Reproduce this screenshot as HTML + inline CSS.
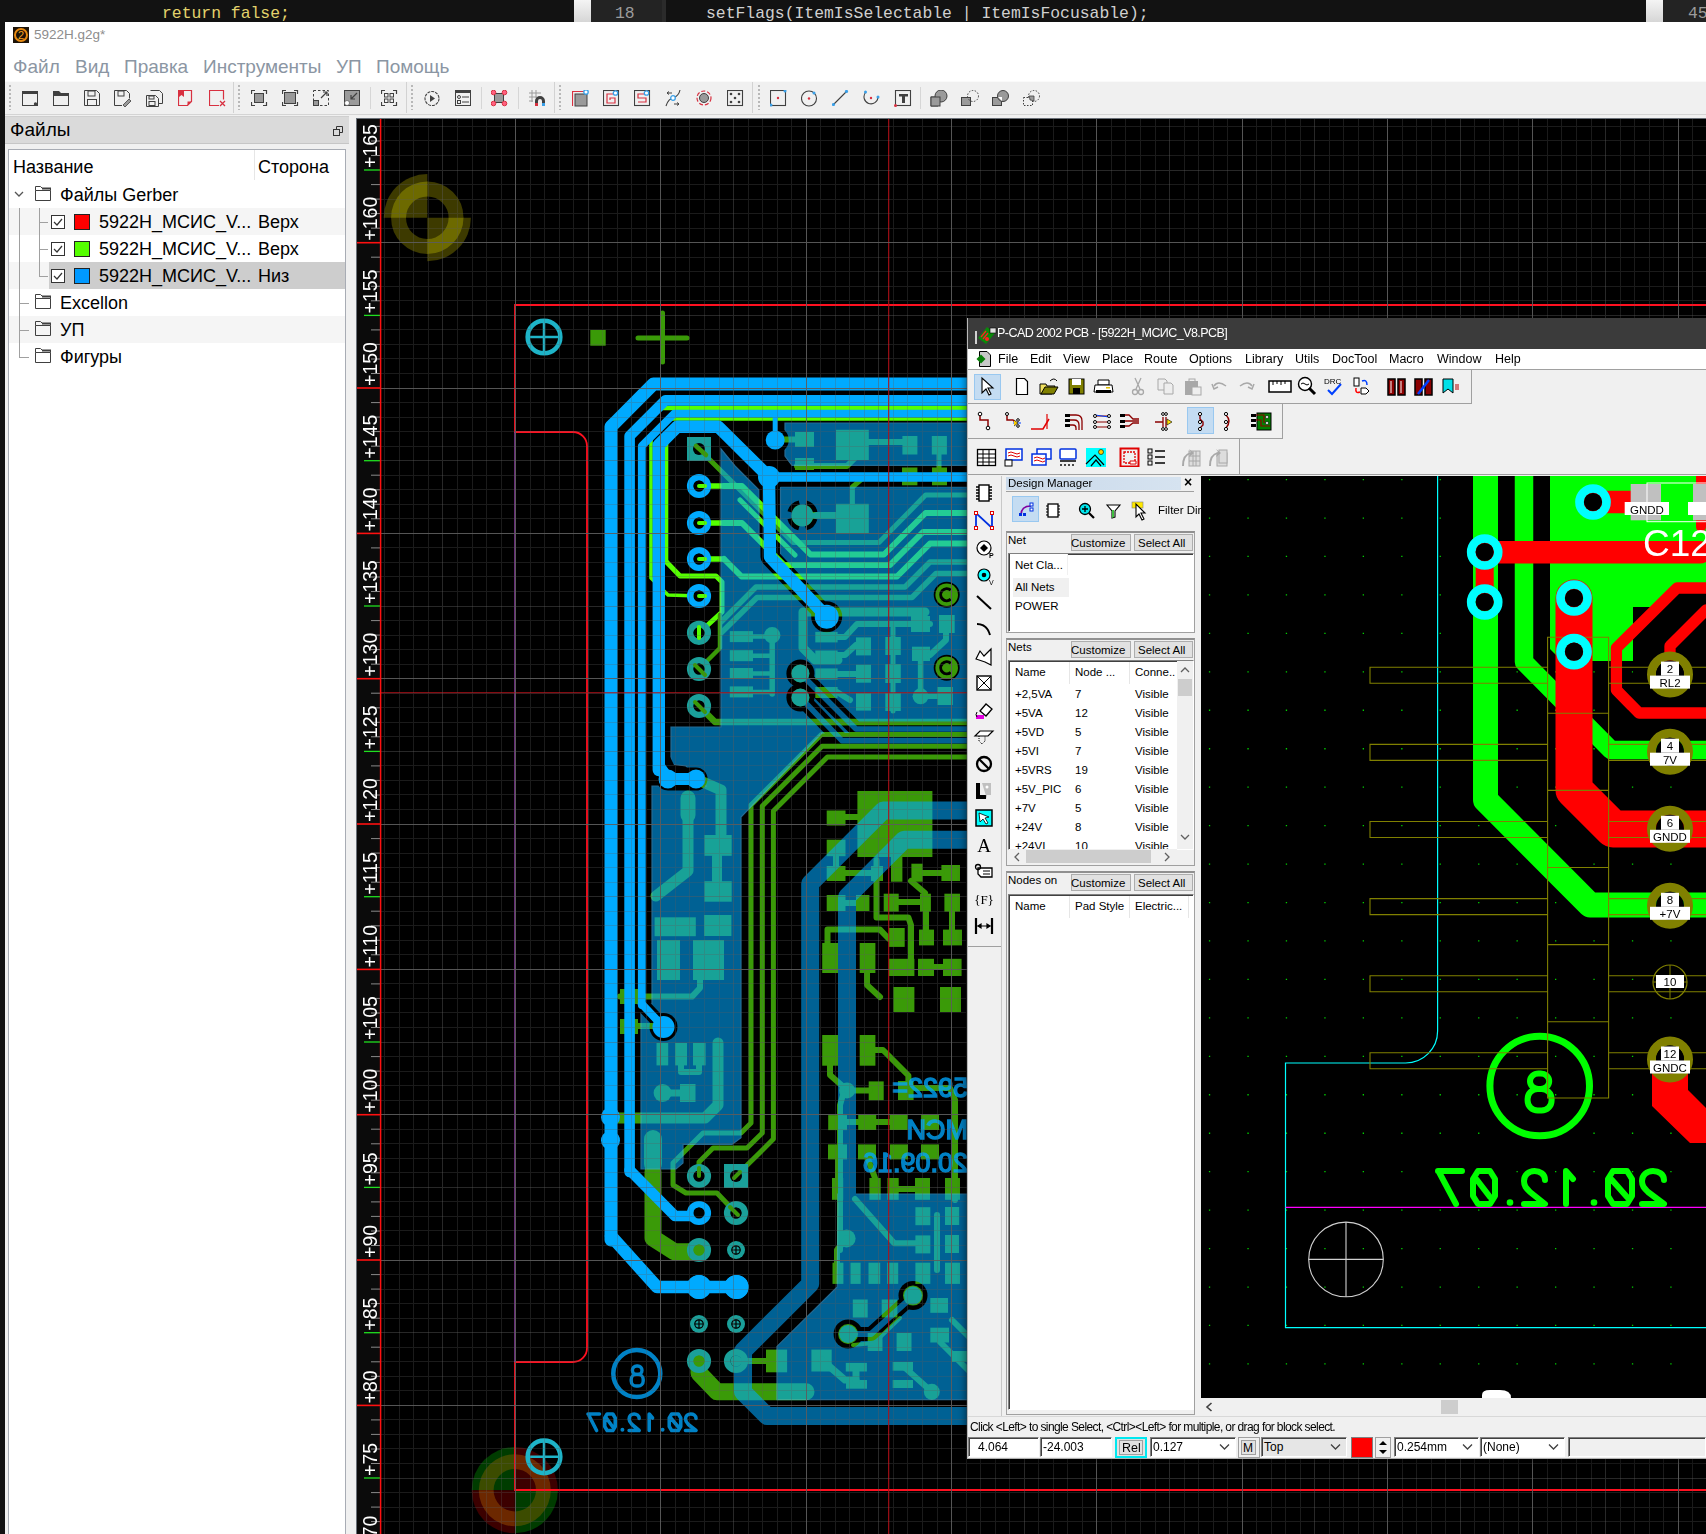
<!DOCTYPE html>
<html><head><meta charset="utf-8"><style>*{margin:0;padding:0;box-sizing:border-box}
html,body{width:1706px;height:1534px;overflow:hidden;background:#121212;font-family:"Liberation Sans",sans-serif}
.a{position:absolute}
.mono{font-family:"Liberation Mono",monospace}
.menu{top:56px;font-size:19px;color:#8b96a3;white-space:nowrap}
.tt{font-size:18px;color:#000;white-space:nowrap}
.pm{font-size:12.5px;color:#000;white-space:nowrap}
.sm{font-size:12px;color:#000;white-space:nowrap}
</style></head><body>
<div class="a" style="left:0;top:0;width:1706px;height:22px;background:#121212"></div>
<div class="a" style="left:574px;top:0;width:17px;height:22px;background:linear-gradient(#f4f4f4,#d6d6d6)"></div>
<div class="a" style="left:591px;top:0;width:71px;height:22px;background:#232323"></div>
<div class="a" style="left:662px;top:0;width:4px;height:22px;background:#2b2b2b"></div>
<div class="a mono" style="left:162px;top:4.5px;font-size:16.4px;line-height:18px;color:#e3d26c;white-space:pre">return false;</div>
<div class="a mono" style="left:615px;top:4.5px;font-size:16.4px;line-height:18px;color:#9c9c9c">18</div>
<div class="a mono" style="left:706px;top:4.5px;font-size:16.4px;line-height:18px;color:#d0d0d0;white-space:pre">setFlags(ItemIsSelectable | ItemIsFocusable);</div>
<div class="a" style="left:1646px;top:0;width:17px;height:22px;background:linear-gradient(#f4f4f4,#d6d6d6)"></div>
<div class="a" style="left:1663px;top:0;width:43px;height:22px;background:#232323"></div>
<div class="a mono" style="left:1688px;top:4.5px;font-size:16.4px;line-height:18px;color:#9c9c9c">45</div>
<div class="a" style="left:5px;top:22px;width:1701px;height:1512px;background:#fff"></div>
<svg class="a" style="left:13px;top:27px" width="16" height="16" viewBox="0 0 16 16"><rect width="16" height="16" fill="#1c1208"/><circle cx="8" cy="8" r="6" fill="none" stroke="#e88a10" stroke-width="2"/><text x="8" y="12" font-size="11" text-anchor="middle" fill="#f0a020" font-family="Liberation Sans">2</text></svg>
<div class="a" style="left:34px;top:27px;font-size:13.5px;color:#8d8d8d;white-space:nowrap">5922H.g2g*</div>
<div class="a menu" style="left:13px">Файл</div>
<div class="a menu" style="left:75px">Вид</div>
<div class="a menu" style="left:124px">Правка</div>
<div class="a menu" style="left:203px">Инструменты</div>
<div class="a menu" style="left:336px">УП</div>
<div class="a menu" style="left:376px">Помощь</div>
<div class="a" style="left:5px;top:81px;width:1701px;height:34px;background:#f0f0f0;border-top:1px solid #fafafa"></div>
<div class="a" style="left:5px;top:114px;width:1701px;height:1px;background:#d4d4d4"></div>
<div class="a" style="left:5px;top:115px;width:1701px;height:3px;background:#f0f0f0"></div>
<div class="a" style="left:9px;top:85px;width:2px;height:25px;background:repeating-linear-gradient(#b8b8b8 0 2px,transparent 2px 4px)"></div>
<div class="a" style="left:238px;top:85px;width:2px;height:25px;background:repeating-linear-gradient(#b8b8b8 0 2px,transparent 2px 4px)"></div>
<div class="a" style="left:411px;top:85px;width:2px;height:25px;background:repeating-linear-gradient(#b8b8b8 0 2px,transparent 2px 4px)"></div>
<div class="a" style="left:559px;top:85px;width:2px;height:25px;background:repeating-linear-gradient(#b8b8b8 0 2px,transparent 2px 4px)"></div>
<div class="a" style="left:758px;top:85px;width:2px;height:25px;background:repeating-linear-gradient(#b8b8b8 0 2px,transparent 2px 4px)"></div>
<div class="a" style="left:233px;top:82px;width:1px;height:31px;background:#d2d2d2"></div>
<div class="a" style="left:406px;top:82px;width:1px;height:31px;background:#d2d2d2"></div>
<div class="a" style="left:554px;top:82px;width:1px;height:31px;background:#d2d2d2"></div>
<div class="a" style="left:752px;top:82px;width:1px;height:31px;background:#d2d2d2"></div>
<div class="a" style="left:370px;top:87px;width:1px;height:22px;background:#d6d6d6"></div>
<div class="a" style="left:481px;top:87px;width:1px;height:22px;background:#d6d6d6"></div>
<div class="a" style="left:518px;top:87px;width:1px;height:22px;background:#d6d6d6"></div>
<div class="a" style="left:920px;top:87px;width:1px;height:22px;background:#d6d6d6"></div>
<svg class="a" style="left:22px;top:90px" width="18" height="17" viewBox="0 0 18 17"><rect x="0.5" y="2.5" width="15" height="13" fill="none" stroke="#404040"/><rect x="0" y="1" width="16" height="3" fill="#404040"/><circle cx="13.5" cy="14" r="1.7" fill="#404040"/></svg>
<svg class="a" style="left:53px;top:90px" width="18" height="17" viewBox="0 0 18 17"><rect x="0.5" y="3.5" width="15" height="12" fill="none" stroke="#404040"/><path d="M0 1h6l2 2h8v3H0z" fill="#404040"/></svg>
<svg class="a" style="left:84px;top:90px" width="18" height="17" viewBox="0 0 18 17"><path d="M0.5 0.5h12l3 3v12h-15z" fill="none" stroke="#404040"/><rect x="4" y="1" width="7" height="5" fill="none" stroke="#404040"/><rect x="3.5" y="9.5" width="9" height="6" fill="none" stroke="#404040"/></svg>
<svg class="a" style="left:114px;top:90px" width="18" height="17" viewBox="0 0 18 17"><path d="M0.5 0.5h12l3 3v5M8 15.5H0.5v-15" fill="none" stroke="#404040"/><rect x="4" y="1" width="6" height="5" fill="none" stroke="#404040"/><path d="M9 15l6-6 2 2-6 6z" fill="#9a9a9a" stroke="#404040" stroke-width="0.8"/></svg>
<svg class="a" style="left:146px;top:90px" width="18" height="17" viewBox="0 0 18 17"><path d="M4.5 0.5h9l3 3v10h-4" fill="none" stroke="#404040"/><path d="M0.5 5.5h9l3 3v8h-12z" fill="#f0f0f0" stroke="#404040"/><rect x="3" y="6" width="5" height="3" fill="none" stroke="#404040"/><rect x="3" y="11.5" width="6" height="4" fill="none" stroke="#404040"/></svg>
<svg class="a" style="left:178px;top:90px" width="18" height="17" viewBox="0 0 18 17"><path d="M0.5 0.5h13v11l-4 4h-9z" fill="none" stroke="#d83040" stroke-width="1.2"/><path d="M1 1h5v6l-2.5-2L1 7z" fill="#d83040"/><path d="M9.5 15.5v-4h4z" fill="#d83040"/></svg>
<svg class="a" style="left:209px;top:90px" width="18" height="17" viewBox="0 0 18 17"><path d="M10 15.5H0.5V0.5h14v9" fill="none" stroke="#d83040" stroke-width="1.2"/><path d="M11 11l5 5M16 11l-5 5" stroke="#d83040" stroke-width="1.3"/></svg>
<svg class="a" style="left:251px;top:90px" width="18" height="17" viewBox="0 0 18 17"><path d="M0.5 4V0.5H4M12 0.5h3.5V4M15.5 12v3.5H12M4 15.5H0.5V12" fill="none" stroke="#404040" stroke-width="1.2"/><rect x="3.5" y="3.5" width="9" height="9" fill="#9a9a9a" stroke="#404040"/></svg>
<svg class="a" style="left:282px;top:90px" width="18" height="17" viewBox="0 0 18 17"><path d="M0.5 4V0.5H4M12 0.5h3.5V4M15.5 12v3.5H12M4 15.5H0.5V12" fill="none" stroke="#404040" stroke-width="1.2"/><rect x="2.5" y="2.5" width="11" height="11" fill="#9a9a9a" stroke="#404040"/></svg>
<svg class="a" style="left:313px;top:90px" width="18" height="17" viewBox="0 0 18 17"><rect x="0.5" y="0.5" width="15" height="15" fill="none" stroke="#404040" stroke-dasharray="2.5 2"/><rect x="0.5" y="10.5" width="5" height="5" fill="#9a9a9a" stroke="#404040"/><path d="M8 8l6-6M10 2h4v4" fill="none" stroke="#404040" stroke-width="1.2"/></svg>
<svg class="a" style="left:344px;top:90px" width="18" height="17" viewBox="0 0 18 17"><rect x="0.5" y="0.5" width="15" height="15" fill="#9a9a9a" stroke="#404040"/><circle cx="3" cy="13" r="2.5" fill="#fff" stroke="#404040" stroke-width="0.6"/><path d="M13 3l-6 6M7 5v4h4" fill="none" stroke="#404040" stroke-width="1.2"/></svg>
<svg class="a" style="left:381px;top:90px" width="18" height="17" viewBox="0 0 18 17"><path d="M0.5 4V0.5H4M12 0.5h3.5V4M15.5 12v3.5H12M4 15.5H0.5V12" fill="none" stroke="#404040" stroke-width="1.2"/><rect x="3.5" y="3.5" width="3.5" height="3.5" fill="none" stroke="#404040"/><rect x="9" y="3.5" width="3.5" height="3.5" fill="none" stroke="#404040"/><rect x="3.5" y="9" width="3.5" height="3.5" fill="none" stroke="#404040"/><rect x="9" y="9" width="3.5" height="3.5" fill="none" stroke="#404040"/></svg>
<svg class="a" style="left:424px;top:90px" width="18" height="17" viewBox="0 0 18 17"><circle cx="8" cy="8.5" r="7" fill="none" stroke="#404040" stroke-width="1.1" stroke-dasharray="3 1"/><path d="M6 5v7l5-3.5z" fill="#404040"/></svg>
<svg class="a" style="left:455px;top:90px" width="18" height="17" viewBox="0 0 18 17"><rect x="0.5" y="0.5" width="15" height="15" fill="none" stroke="#404040"/><rect x="0" y="0" width="16" height="3" fill="#404040"/><circle cx="4" cy="7" r="1.5" fill="none" stroke="#404040"/><rect x="2.5" y="10.5" width="3" height="3" fill="none" stroke="#404040"/><path d="M7 7h7M7 12h7" stroke="#404040"/></svg>
<svg class="a" style="left:491px;top:90px" width="18" height="17" viewBox="0 0 18 17"><rect x="3.5" y="3.5" width="9" height="9" fill="#9a9a9a" stroke="#404040"/><circle cx="2.5" cy="2.5" r="2.3" fill="#ff6080" stroke="#d83040"/><circle cx="13.5" cy="2.5" r="2.3" fill="#ff6080" stroke="#d83040"/><circle cx="2.5" cy="13.5" r="2.3" fill="#ff6080" stroke="#d83040"/><circle cx="13.5" cy="13.5" r="2.3" fill="#ff6080" stroke="#d83040"/></svg>
<svg class="a" style="left:529px;top:90px" width="18" height="17" viewBox="0 0 18 17"><path d="M3 0v12M7 0v8M0 3h12M0 7h8M0 11h4" stroke="#9a9a9a"/><path d="M6 16v-5a5 5 0 0 1 10 0v5h-3v-5a2 2 0 0 0-4 0v5z" fill="#404040"/><rect x="6" y="13" width="3" height="3" fill="#d83040"/><rect x="13" y="13" width="3" height="3" fill="#3aa0e8"/></svg>
<svg class="a" style="left:572px;top:90px" width="18" height="17" viewBox="0 0 18 17"><path d="M0.5 16V1.5H13" fill="none" stroke="#d83040" stroke-width="1.2"/><rect x="3" y="4" width="12" height="12" fill="#9a9a9a" stroke="#404040"/><circle cx="14" cy="2" r="2.2" fill="#fff" stroke="#3aa0e8" stroke-width="1.3"/></svg>
<svg class="a" style="left:603px;top:90px" width="18" height="17" viewBox="0 0 18 17"><rect x="0.5" y="0.5" width="15" height="15" fill="none" stroke="#404040" stroke-width="1.1"/><path d="M12 4H4v9h8V8H7v2" fill="none" stroke="#d83040" stroke-width="1.2"/><circle cx="12.5" cy="3" r="2.2" fill="#fff" stroke="#3aa0e8" stroke-width="1.3"/></svg>
<svg class="a" style="left:634px;top:90px" width="18" height="17" viewBox="0 0 18 17"><rect x="0.5" y="0.5" width="15" height="15" fill="none" stroke="#404040" stroke-width="1.1"/><path d="M12 4H4v4h8v4H4" fill="none" stroke="#d83040" stroke-width="1.2"/><circle cx="12.5" cy="3" r="2.2" fill="#fff" stroke="#3aa0e8" stroke-width="1.3"/></svg>
<svg class="a" style="left:665px;top:90px" width="18" height="17" viewBox="0 0 18 17"><path d="M1 16c2-6 4-7 7-8s6-3 7-8" fill="none" stroke="#404040" stroke-width="1.1"/><circle cx="8" cy="8" r="2.3" fill="#fff" stroke="#3aa0e8" stroke-width="1.3"/><path d="M2 3h5M2 3l2-1.5M2 3l2 1.5M9 14h5M14 14l-2-1.5M14 14l-2 1.5" stroke="#404040"/></svg>
<svg class="a" style="left:696px;top:90px" width="18" height="17" viewBox="0 0 18 17"><circle cx="8" cy="8" r="7" fill="none" stroke="#d83040" stroke-width="1.2" stroke-dasharray="4 2"/><circle cx="8" cy="8" r="4.5" fill="#9a9a9a" stroke="#404040"/></svg>
<svg class="a" style="left:727px;top:90px" width="18" height="17" viewBox="0 0 18 17"><rect x="0.5" y="0.5" width="15" height="15" fill="none" stroke="#404040" stroke-width="1.1"/><circle cx="4" cy="4" r="1.3" fill="#404040"/><circle cx="12" cy="4" r="1.3" fill="#404040"/><circle cx="8" cy="8" r="1.3" fill="#404040"/><circle cx="4" cy="12" r="1.3" fill="#404040"/><circle cx="12" cy="12" r="1.3" fill="#404040"/></svg>
<svg class="a" style="left:770px;top:90px" width="18" height="17" viewBox="0 0 18 17"><rect x="0.5" y="0.5" width="15" height="15" fill="none" stroke="#404040" stroke-width="1.1"/><circle cx="8" cy="8" r="1.2" fill="#d83040"/><circle cx="1" cy="15" r="1.5" fill="#3aa0e8"/><circle cx="15" cy="1" r="1.5" fill="#3aa0e8"/></svg>
<svg class="a" style="left:801px;top:90px" width="18" height="17" viewBox="0 0 18 17"><circle cx="8" cy="8.5" r="7.5" fill="none" stroke="#404040" stroke-width="1.1"/><circle cx="8" cy="8.5" r="1.2" fill="#d83040"/><circle cx="13" cy="3" r="1.5" fill="#3aa0e8"/></svg>
<svg class="a" style="left:832px;top:90px" width="18" height="17" viewBox="0 0 18 17"><path d="M1.5 14.5l13-13" stroke="#404040" stroke-width="1.1"/><circle cx="1.5" cy="14.5" r="1.6" fill="#3aa0e8"/><circle cx="14.5" cy="1.5" r="1.6" fill="#3aa0e8"/></svg>
<svg class="a" style="left:863px;top:90px" width="18" height="17" viewBox="0 0 18 17"><path d="M2.5 2.5A7 7 0 1 0 15 7" fill="none" stroke="#404040" stroke-width="1.1"/><circle cx="8" cy="8" r="1.2" fill="#d83040"/><circle cx="2.5" cy="2" r="1.5" fill="#3aa0e8"/><circle cx="15" cy="7" r="1.5" fill="#3aa0e8"/></svg>
<svg class="a" style="left:894px;top:90px" width="18" height="17" viewBox="0 0 18 17"><rect x="1.5" y="0.5" width="15" height="15" fill="none" stroke="#404040" stroke-width="1.1"/><path d="M5 4h9v2.5h-3V13H8V6.5H5z" fill="#404040"/><circle cx="1.5" cy="15.5" r="1.5" fill="#d83040"/></svg>
<svg class="a" style="left:930px;top:90px" width="18" height="17" viewBox="0 0 18 17"><path d="M1 7h7V16H1z" fill="#9a9a9a" stroke="#404040"/><circle cx="11" cy="6" r="6" fill="#9a9a9a" stroke="#404040"/><rect x="1" y="7" width="9" height="9" fill="#9a9a9a" stroke="#404040"/></svg>
<svg class="a" style="left:961px;top:90px" width="18" height="17" viewBox="0 0 18 17"><rect x="0.5" y="7.5" width="9" height="8" fill="#9a9a9a" stroke="#404040"/><circle cx="12" cy="6" r="5.5" fill="none" stroke="#404040" stroke-dasharray="1.5 1.5"/></svg>
<svg class="a" style="left:992px;top:90px" width="18" height="17" viewBox="0 0 18 17"><rect x="0.5" y="7.5" width="9" height="8" fill="#9a9a9a" stroke="#404040"/><circle cx="11" cy="6" r="5.5" fill="#9a9a9a" stroke="#404040"/><path d="M6 7h4v4z" fill="#fff"/></svg>
<svg class="a" style="left:1023px;top:90px" width="18" height="17" viewBox="0 0 18 17"><rect x="0.5" y="7.5" width="9" height="8" fill="none" stroke="#404040" stroke-dasharray="1.5 1.5"/><circle cx="11" cy="6" r="5.5" fill="none" stroke="#404040" stroke-dasharray="1.5 1.5"/><path d="M6 6h5v5A5 5 0 0 1 6 6z" fill="#9a9a9a" stroke="#404040" stroke-width="0.8"/></svg>
<div class="a" style="left:5px;top:115px;width:351px;height:1419px;background:#f0f0f0"></div>
<div class="a" style="left:5px;top:116px;width:344px;height:28px;background:#dadada;border-bottom:1px solid #c6c6c6;border-top:1px solid #cfcfcf"></div>
<div class="a tt" style="left:10px;top:119px;font-size:19px">Файлы</div>
<svg class="a" style="left:333px;top:126px" width="10" height="10" viewBox="0 0 10 10"><rect x="0.5" y="3.5" width="6" height="6" fill="none" stroke="#333"/><path d="M3.5 3.5V0.5h6v6H6.5" fill="none" stroke="#333"/></svg>
<div class="a" style="left:8px;top:149px;width:338px;height:1390px;background:#fff;border:1px solid #a8acb4"></div>
<div class="a" style="left:254px;top:150px;width:1px;height:30px;background:#e6e6e6"></div>
<div class="a tt" style="left:13px;top:157px">Название</div>
<div class="a tt" style="left:258px;top:157px">Сторона</div>
<div class="a" style="left:9px;top:208px;width:336px;height:27px;background:#f5f5f5"></div>
<div class="a" style="left:9px;top:262px;width:40px;height:27px;background:#f5f5f5"></div>
<div class="a" style="left:49px;top:262px;width:296px;height:27px;background:#cdcdcd"></div>
<div class="a" style="left:9px;top:316px;width:336px;height:27px;background:#f5f5f5"></div>
<div class="a" style="left:19px;top:208px;width:1px;height:149px;background:#a0a0a0"></div>
<div class="a" style="left:19px;top:303px;width:10px;height:1px;background:#a0a0a0"></div>
<div class="a" style="left:19px;top:330px;width:10px;height:1px;background:#a0a0a0"></div>
<div class="a" style="left:19px;top:357px;width:10px;height:1px;background:#a0a0a0"></div>
<div class="a" style="left:39px;top:208px;width:1px;height:68px;background:#a0a0a0"></div>
<div class="a" style="left:39px;top:222px;width:9px;height:1px;background:#a0a0a0"></div>
<div class="a" style="left:39px;top:249px;width:9px;height:1px;background:#a0a0a0"></div>
<div class="a" style="left:39px;top:276px;width:9px;height:1px;background:#a0a0a0"></div>
<svg class="a" style="left:14px;top:191px" width="10" height="7" viewBox="0 0 10 7"><path d="M1 1l4 4 4-4" fill="none" stroke="#555" stroke-width="1.3"/></svg>
<svg class="a" style="left:35px;top:186px" width="17" height="16" viewBox="0 0 17 16"><path d="M0.5 4.5h15v10h-15z" fill="none" stroke="#404040"/><path d="M0.5 4.5V0.5h5l2 2h8v2" fill="none" stroke="#404040"/><rect x="7" y="1.5" width="9" height="2" fill="#404040"/></svg>
<div class="a tt" style="left:60px;top:185px">Файлы Gerber</div>
<svg class="a" style="left:35px;top:294px" width="17" height="16" viewBox="0 0 17 16"><path d="M0.5 4.5h15v10h-15z" fill="none" stroke="#404040"/><path d="M0.5 4.5V0.5h5l2 2h8v2" fill="none" stroke="#404040"/><rect x="7" y="1.5" width="9" height="2" fill="#404040"/></svg>
<div class="a tt" style="left:60px;top:293px">Excellon</div>
<svg class="a" style="left:35px;top:321px" width="17" height="16" viewBox="0 0 17 16"><path d="M0.5 4.5h15v10h-15z" fill="none" stroke="#404040"/><path d="M0.5 4.5V0.5h5l2 2h8v2" fill="none" stroke="#404040"/><rect x="7" y="1.5" width="9" height="2" fill="#404040"/></svg>
<div class="a tt" style="left:60px;top:320px">УП</div>
<svg class="a" style="left:35px;top:348px" width="17" height="16" viewBox="0 0 17 16"><path d="M0.5 4.5h15v10h-15z" fill="none" stroke="#404040"/><path d="M0.5 4.5V0.5h5l2 2h8v2" fill="none" stroke="#404040"/><rect x="7" y="1.5" width="9" height="2" fill="#404040"/></svg>
<div class="a tt" style="left:60px;top:347px">Фигуры</div>
<svg class="a" style="left:51px;top:215px" width="14" height="14" viewBox="0 0 14 14"><rect x="0.5" y="0.5" width="13" height="13" fill="#fff" stroke="#333"/><path d="M3 7l3 3 5-6" fill="none" stroke="#333" stroke-width="1.2"/></svg>
<div class="a" style="left:74px;top:214px;width:16px;height:16px;background:#ff0000;border:1px solid #222"></div>
<div class="a tt" style="left:99px;top:212px">5922H_МСИС_V...</div>
<div class="a tt" style="left:258px;top:212px">Верх</div>
<svg class="a" style="left:51px;top:242px" width="14" height="14" viewBox="0 0 14 14"><rect x="0.5" y="0.5" width="13" height="13" fill="#fff" stroke="#333"/><path d="M3 7l3 3 5-6" fill="none" stroke="#333" stroke-width="1.2"/></svg>
<div class="a" style="left:74px;top:241px;width:16px;height:16px;background:#55ff00;border:1px solid #222"></div>
<div class="a tt" style="left:99px;top:239px">5922H_МСИС_V...</div>
<div class="a tt" style="left:258px;top:239px">Верх</div>
<svg class="a" style="left:51px;top:269px" width="14" height="14" viewBox="0 0 14 14"><rect x="0.5" y="0.5" width="13" height="13" fill="#fff" stroke="#333"/><path d="M3 7l3 3 5-6" fill="none" stroke="#333" stroke-width="1.2"/></svg>
<div class="a" style="left:74px;top:268px;width:16px;height:16px;background:#0099ff;border:1px solid #222"></div>
<div class="a tt" style="left:99px;top:266px">5922H_МСИС_V...</div>
<div class="a tt" style="left:258px;top:266px">Низ</div>
<div class="a" style="left:356px;top:118px;width:1350px;height:1416px;background:#6a7078"></div>
<div class="a" style="left:357px;top:119px;width:1349px;height:1415px;overflow:hidden;background:#000">
<svg class="a" style="left:-357px;top:-119px" width="1706" height="1534" viewBox="0 0 1706 1534">
<circle cx="427.3" cy="217.7" r="28.75" fill="none" stroke="#3d3a00" stroke-width="14.9" />
<path d="M427.3,217.7L383.70,217.70A43.6,43.6 0 0 1 427.30,174.10Z" fill="#3d3a00"/>
<path d="M427.3,217.7L470.90,217.70A43.6,43.6 0 0 1 427.30,261.30Z" fill="#3d3a00"/>
<path d="M391.10,217.70A36.2,36.2 0 0 1 427.30,181.50L427.30,196.40A21.3,21.3 0 0 0 406.00,217.70Z" fill="#6d6a00"/>
<path d="M463.50,217.70A36.2,36.2 0 0 1 427.30,253.90L427.30,239.00A21.3,21.3 0 0 0 448.60,217.70Z" fill="#6d6a00"/>
<path d="M514.8,1490.2L471.70,1490.20A43.1,43.1 0 0 1 514.80,1447.10Z" fill="#003c00"/>
<path d="M478.80,1490.20A36,36 0 0 1 514.80,1454.20L514.80,1469.00A21.2,21.2 0 0 0 493.60,1490.20Z" fill="#3c4c00"/>
<path d="M514.8,1490.2L514.80,1447.10A43.1,43.1 0 0 1 557.90,1490.20Z" fill="#3c0000"/>
<path d="M514.80,1454.20A36,36 0 0 1 550.80,1490.20L536.00,1490.20A21.2,21.2 0 0 0 514.80,1469.00Z" fill="#6c2800"/>
<path d="M514.8,1490.2L557.90,1490.20A43.1,43.1 0 0 1 514.80,1533.30Z" fill="#003c00"/>
<path d="M550.80,1490.20A36,36 0 0 1 514.80,1526.20L514.80,1511.40A21.2,21.2 0 0 0 536.00,1490.20Z" fill="#3c4c00"/>
<path d="M514.8,1490.2L514.80,1533.30A43.1,43.1 0 0 1 471.70,1490.20Z" fill="#3c0000"/>
<path d="M514.80,1526.20A36,36 0 0 1 478.80,1490.20L493.60,1490.20A21.2,21.2 0 0 0 514.80,1511.40Z" fill="#6c2800"/>
<g><rect x="590.3" y="330.0" width="15.4" height="15.7" fill="#3a9a08"/><path d="M638,338H687M662.5,313V362" stroke="#3a9a08" stroke-width="5" stroke-linecap="round"/><polyline points="655.0,408.0 970.0,408.0" fill="none" stroke="#55ff00" stroke-width="4.6" stroke-linejoin="round" stroke-linecap="round" stroke-linejoin="miter" stroke-linecap="butt"/><polyline points="668.0,419.0 970.0,419.0" fill="none" stroke="#55ff00" stroke-width="3.4" stroke-linejoin="round" stroke-linecap="round" stroke-linejoin="miter" stroke-linecap="butt"/><polyline points="651.0,436.0 651.0,578.0 668.0,595.0 699.0,596.0" fill="none" stroke="#55ff00" stroke-width="3.6" stroke-linejoin="round" stroke-linecap="round" stroke-linejoin="miter" stroke-linecap="round"/><polyline points="666.5,436.0 666.5,562.0" fill="none" stroke="#55ff00" stroke-width="3.6" stroke-linejoin="round" stroke-linecap="round" stroke-linejoin="miter" stroke-linecap="round"/><polyline points="666.5,562.0 680.0,576.0 716.0,576.0 722.0,582.0 722.0,612.0 699.0,633.0" fill="none" stroke="#55ff00" stroke-width="5" stroke-linejoin="round" stroke-linecap="round" stroke-linejoin="miter" stroke-linecap="round"/><polyline points="699.0,486.0 724.0,486.0" fill="none" stroke="#55ff00" stroke-width="5.5" stroke-linejoin="round" stroke-linecap="round" stroke-linejoin="miter" stroke-linecap="round"/><polyline points="699.0,523.0 724.0,523.0" fill="none" stroke="#55ff00" stroke-width="5.5" stroke-linejoin="round" stroke-linecap="round" stroke-linejoin="miter" stroke-linecap="round"/><polyline points="699.0,559.0 724.0,559.0" fill="none" stroke="#55ff00" stroke-width="5.5" stroke-linejoin="round" stroke-linecap="round" stroke-linejoin="miter" stroke-linecap="round"/><polyline points="699.0,449.0 793.0,542.6 879.0,542.6 925.6,495.0 970.0,495.0" fill="none" stroke="#3a9a08" stroke-width="5" stroke-linejoin="round" stroke-linecap="round" stroke-linejoin="miter" stroke-linecap="round"/><polyline points="724.0,486.0 742.0,486.0 810.5,554.5 884.0,554.5 925.6,513.0 970.0,513.0" fill="none" stroke="#55ff00" stroke-width="6" stroke-linejoin="round" stroke-linecap="round" stroke-linejoin="miter" stroke-linecap="round"/><polyline points="724.0,523.0 742.0,523.0 784.0,565.0 890.0,565.0 923.0,532.0 970.0,532.0" fill="none" stroke="#55ff00" stroke-width="6" stroke-linejoin="round" stroke-linecap="round" stroke-linejoin="miter" stroke-linecap="round"/><polyline points="724.0,559.0 741.5,576.5 897.0,576.5 930.0,543.6 970.0,543.6" fill="none" stroke="#55ff00" stroke-width="6" stroke-linejoin="round" stroke-linecap="round" stroke-linejoin="miter" stroke-linecap="round"/><polyline points="721.0,622.0 756.0,587.0 905.0,587.0 930.0,562.0 970.0,562.0" fill="none" stroke="#3a9a08" stroke-width="5.5" stroke-linejoin="round" stroke-linecap="round" stroke-linejoin="miter" stroke-linecap="round"/><polyline points="721.0,633.0 757.0,597.5 912.0,597.5 936.0,573.5 970.0,573.5" fill="none" stroke="#3a9a08" stroke-width="5.5" stroke-linejoin="round" stroke-linecap="round" stroke-linejoin="miter" stroke-linecap="round"/><rect x="729.8" y="631.1" width="23.2" height="11.0" fill="#3a9a08"/><polyline points="753.0,636.6 772.2,636.6" fill="none" stroke="#3a9a08" stroke-width="4.5" stroke-linejoin="round" stroke-linecap="round" stroke-linejoin="miter" stroke-linecap="round"/><rect x="729.8" y="650.2" width="23.2" height="11.0" fill="#3a9a08"/><polyline points="753.0,655.7 772.2,655.7" fill="none" stroke="#3a9a08" stroke-width="4.5" stroke-linejoin="round" stroke-linecap="round" stroke-linejoin="miter" stroke-linecap="round"/><rect x="729.8" y="668.0" width="23.2" height="11.0" fill="#3a9a08"/><polyline points="753.0,673.5 772.2,673.5" fill="none" stroke="#3a9a08" stroke-width="4.5" stroke-linejoin="round" stroke-linecap="round" stroke-linejoin="miter" stroke-linecap="round"/><rect x="729.8" y="686.4" width="23.2" height="11.0" fill="#3a9a08"/><polyline points="753.0,691.9 772.2,691.9" fill="none" stroke="#3a9a08" stroke-width="4.5" stroke-linejoin="round" stroke-linecap="round" stroke-linejoin="miter" stroke-linecap="round"/><polyline points="772.2,634.0 772.2,694.0" fill="none" stroke="#3a9a08" stroke-width="5.5" stroke-linejoin="round" stroke-linecap="round" stroke-linejoin="miter" stroke-linecap="round"/><circle cx="772.2" cy="635.2" r="8.2" fill="#3a9a08" /><polyline points="740.0,500.0 782.0,542.0 795.0,555.0" fill="none" stroke="#55ff00" stroke-width="5" stroke-linejoin="round" stroke-linecap="round" stroke-linejoin="miter" stroke-linecap="round"/><rect x="795.0" y="432.0" width="19.0" height="15.0" fill="#3a9a08"/><polyline points="780.0,439.6 800.0,439.6" fill="none" stroke="#3a9a08" stroke-width="6" stroke-linejoin="round" stroke-linecap="round" stroke-linejoin="miter" stroke-linecap="round"/><rect x="836.0" y="429.8" width="32.8" height="30.2" fill="#3a9a08"/><polyline points="868.0,442.0 903.0,442.0" fill="none" stroke="#3a9a08" stroke-width="6" stroke-linejoin="round" stroke-linecap="round" stroke-linejoin="miter" stroke-linecap="round"/><rect x="902.4" y="436.0" width="15.0" height="18.5" fill="#3a9a08"/><rect x="931.8" y="436.0" width="15.1" height="18.5" fill="#3a9a08"/><polyline points="939.0,454.0 939.0,470.0" fill="none" stroke="#3a9a08" stroke-width="5" stroke-linejoin="round" stroke-linecap="round" stroke-linejoin="miter" stroke-linecap="round"/><rect x="902.0" y="467.5" width="15.4" height="17.8" fill="#3a9a08"/><rect x="932.0" y="467.5" width="15.0" height="17.8" fill="#3a9a08"/><polyline points="797.0,466.0 847.0,466.0 855.0,458.0" fill="none" stroke="#3a9a08" stroke-width="6" stroke-linejoin="round" stroke-linecap="round" stroke-linejoin="miter" stroke-linecap="round"/><rect x="795.0" y="458.0" width="19.0" height="12.0" fill="#3a9a08"/><circle cx="802.4" cy="515.4" r="11" fill="#3a9a08" /><polyline points="802.0,515.4 836.0,515.4" fill="none" stroke="#3a9a08" stroke-width="7" stroke-linejoin="round" stroke-linecap="round" stroke-linejoin="miter" stroke-linecap="round"/><rect x="836.0" y="503.8" width="32.8" height="29.4" fill="#3a9a08"/><polyline points="852.4,504.0 852.4,487.0 863.0,478.0" fill="none" stroke="#3a9a08" stroke-width="5" stroke-linejoin="round" stroke-linecap="round" stroke-linejoin="miter" stroke-linecap="round"/><circle cx="946.7" cy="594.7" r="11.3" fill="#3a9a08" /><circle cx="946.7" cy="667.8" r="11.3" fill="#3a9a08" /><polyline points="925.0,612.0 803.0,612.0 803.0,648.0 815.0,660.0 838.0,660.0" fill="none" stroke="#3a9a08" stroke-width="9" stroke-linejoin="round" stroke-linecap="round" stroke-linejoin="miter" stroke-linecap="butt"/><rect x="815.3" y="631.9" width="22.3" height="10.5" fill="#3a9a08"/><polyline points="837.0,637.0 845.0,637.0 857.0,624.0 930.0,624.0" fill="none" stroke="#3a9a08" stroke-width="6" stroke-linejoin="round" stroke-linecap="round" stroke-linejoin="miter" stroke-linecap="round"/><rect x="911.0" y="616.0" width="19.0" height="16.0" fill="#3a9a08"/><rect x="815.3" y="650.5" width="22.3" height="10.5" fill="#3a9a08"/><polyline points="837.0,655.0 845.0,655.0 856.0,645.0" fill="none" stroke="#3a9a08" stroke-width="6" stroke-linejoin="round" stroke-linecap="round" stroke-linejoin="miter" stroke-linecap="round"/><rect x="856.0" y="637.4" width="15.0" height="18.0" fill="#3a9a08"/><rect x="815.3" y="668.4" width="22.3" height="11.2" fill="#3a9a08"/><polyline points="837.0,674.0 858.0,674.0" fill="none" stroke="#3a9a08" stroke-width="6" stroke-linejoin="round" stroke-linecap="round" stroke-linejoin="miter" stroke-linecap="round"/><rect x="856.0" y="664.7" width="15.0" height="18.0" fill="#3a9a08"/><rect x="815.3" y="687.0" width="22.3" height="11.0" fill="#3a9a08"/><polyline points="837.0,692.0 850.0,700.0" fill="none" stroke="#3a9a08" stroke-width="6" stroke-linejoin="round" stroke-linecap="round" stroke-linejoin="miter" stroke-linecap="round"/><rect x="856.0" y="693.0" width="15.0" height="17.6" fill="#3a9a08"/><rect x="885.3" y="637.0" width="15.5" height="18.0" fill="#3a9a08"/><rect x="885.3" y="664.0" width="15.5" height="19.0" fill="#3a9a08"/><rect x="885.3" y="693.0" width="15.5" height="18.0" fill="#3a9a08"/><polyline points="893.0,628.0 893.0,711.0" fill="none" stroke="#3a9a08" stroke-width="5" stroke-linejoin="round" stroke-linecap="round" stroke-linejoin="miter" stroke-linecap="round"/><rect x="912.0" y="646.7" width="18.0" height="14.3" fill="#3a9a08"/><polyline points="920.6,661.0 920.6,696.3 945.0,696.3" fill="none" stroke="#3a9a08" stroke-width="5.5" stroke-linejoin="round" stroke-linecap="round" stroke-linejoin="miter" stroke-linecap="round"/><circle cx="920.6" cy="696.3" r="8" fill="#3a9a08" /><rect x="937.4" y="687.0" width="15.5" height="18.0" fill="#3a9a08"/><rect x="939.0" y="615.0" width="15.7" height="18.0" fill="#3a9a08"/><polyline points="946.0,633.0 946.0,640.0 930.0,655.0" fill="none" stroke="#3a9a08" stroke-width="6" stroke-linejoin="round" stroke-linecap="round" stroke-linejoin="miter" stroke-linecap="round"/><circle cx="800.4" cy="673.4" r="9" fill="#3a9a08" /><circle cx="800.4" cy="697.5" r="9" fill="#3a9a08" /><polyline points="699.0,669.0 720.0,648.0 720.0,615.0" fill="none" stroke="#3a9a08" stroke-width="4.5" stroke-linejoin="round" stroke-linecap="round" stroke-linejoin="miter" stroke-linecap="round"/><polyline points="699.0,706.0 715.0,722.0 850.0,722.0" fill="none" stroke="#3a9a08" stroke-width="6.5" stroke-linejoin="round" stroke-linecap="round" stroke-linejoin="miter" stroke-linecap="round"/><polyline points="696.0,779.0 721.0,790.0 721.0,834.0" fill="none" stroke="#3a9a08" stroke-width="11" stroke-linejoin="round" stroke-linecap="round" stroke-linejoin="miter" stroke-linecap="butt"/><polyline points="688.0,798.0 688.0,815.0" fill="none" stroke="#3a9a08" stroke-width="15" stroke-linejoin="round" stroke-linecap="round" stroke-linejoin="miter" stroke-linecap="butt"/><polyline points="688.0,815.0 688.0,871.0 656.0,896.0" fill="none" stroke="#3a9a08" stroke-width="11" stroke-linejoin="round" stroke-linecap="round" stroke-linejoin="miter" stroke-linecap="butt"/><rect x="704.3" y="835.0" width="27.4" height="20.8" fill="#3a9a08"/><rect x="704.3" y="881.2" width="27.4" height="20.5" fill="#3a9a08"/><polyline points="717.0,856.0 717.0,881.0" fill="none" stroke="#3a9a08" stroke-width="10" stroke-linejoin="round" stroke-linecap="round" stroke-linejoin="miter" stroke-linecap="round"/><rect x="654.6" y="917.3" width="41.2" height="18.9" fill="#3a9a08"/><rect x="704.0" y="915.0" width="27.4" height="21.0" fill="#3a9a08"/><rect x="657.0" y="940.0" width="23.0" height="40.0" fill="#3a9a08"/><rect x="693.0" y="940.0" width="31.0" height="40.0" fill="#3a9a08"/><polyline points="700.0,975.0 700.0,988.0 692.0,996.6 620.0,996.6" fill="none" stroke="#3a9a08" stroke-width="6" stroke-linejoin="round" stroke-linecap="round" stroke-linejoin="miter" stroke-linecap="round"/><rect x="656.5" y="1043.0" width="11.7" height="22.4" fill="#3a9a08"/><rect x="675.0" y="1043.0" width="12.0" height="22.4" fill="#3a9a08"/><rect x="693.0" y="1043.0" width="12.6" height="22.4" fill="#3a9a08"/><polyline points="681.0,1065.0 681.0,1072.0 699.0,1072.0 699.0,1065.0" fill="none" stroke="#3a9a08" stroke-width="6" stroke-linejoin="round" stroke-linecap="round" stroke-linejoin="miter" stroke-linecap="round"/><circle cx="662.6" cy="1093" r="9" fill="#3a9a08" /><polyline points="662.6,1093.0 690.0,1093.0" fill="none" stroke="#3a9a08" stroke-width="7" stroke-linejoin="round" stroke-linecap="round" stroke-linejoin="miter" stroke-linecap="round"/><rect x="680.0" y="1084.0" width="15.5" height="18.0" fill="#3a9a08"/><polyline points="718.0,1043.0 718.0,1105.0 705.0,1118.0 619.0,1118.0" fill="none" stroke="#3a9a08" stroke-width="11" stroke-linejoin="round" stroke-linecap="round" stroke-linejoin="miter" stroke-linecap="round"/><rect x="620.0" y="989.0" width="18.0" height="15.0" fill="#3a9a08"/><rect x="620.0" y="1019.0" width="18.0" height="15.0" fill="#3a9a08"/><polyline points="630.0,1026.0 660.0,1026.0" fill="none" stroke="#3a9a08" stroke-width="6" stroke-linejoin="round" stroke-linecap="round" stroke-linejoin="miter" stroke-linecap="round"/><polyline points="653.0,1139.0 653.0,1164.0" fill="none" stroke="#3a9a08" stroke-width="18" stroke-linejoin="round" stroke-linecap="round" stroke-linejoin="miter" stroke-linecap="round"/><polyline points="653.0,1172.0 653.0,1238.0 674.6,1251.8 699.0,1251.8" fill="none" stroke="#3a9a08" stroke-width="17" stroke-linejoin="round" stroke-linecap="round" stroke-linejoin="miter" stroke-linecap="butt"/><polyline points="970.0,734.6 821.4,734.6 751.0,805.0 751.0,1123.0 741.0,1133.0 703.0,1133.0 673.0,1163.0 673.0,1185.0 686.0,1193.0 717.0,1193.0 736.0,1213.0" fill="none" stroke="#3a9a08" stroke-width="5" stroke-linejoin="round" stroke-linecap="round" stroke-linejoin="miter" stroke-linecap="round"/><polyline points="970.0,746.3 822.0,746.3 762.3,806.0 762.3,1133.0 747.0,1148.0 713.0,1148.0 699.0,1162.0 699.0,1176.0" fill="none" stroke="#3a9a08" stroke-width="5" stroke-linejoin="round" stroke-linecap="round" stroke-linejoin="miter" stroke-linecap="round"/><polyline points="970.0,757.0 827.4,757.0 773.4,811.0 773.4,1139.0 759.5,1153.0 736.0,1176.0" fill="none" stroke="#3a9a08" stroke-width="5" stroke-linejoin="round" stroke-linecap="round" stroke-linejoin="miter" stroke-linecap="round"/><polyline points="840.0,722.0 970.0,722.0" fill="none" stroke="#3a9a08" stroke-width="6.5" stroke-linejoin="round" stroke-linecap="round" stroke-linejoin="miter" stroke-linecap="round"/><polyline points="699.0,1361.0 699.0,1373.0 717.0,1391.8 806.0,1391.8" fill="none" stroke="#3a9a08" stroke-width="17" stroke-linejoin="round" stroke-linecap="round" stroke-linejoin="miter" stroke-linecap="round"/><polyline points="736.0,1361.0 770.0,1361.0" fill="none" stroke="#3a9a08" stroke-width="6" stroke-linejoin="round" stroke-linecap="round" stroke-linejoin="miter" stroke-linecap="round"/><rect x="766.0" y="1349.6" width="10.2" height="22.7" fill="#3a9a08"/><rect x="776.0" y="1349.6" width="11.1" height="22.7" fill="#3a9a08"/><rect x="857.4" y="791.0" width="75.0" height="66.0" fill="#3a9a08"/><rect x="826.7" y="810.5" width="18.8" height="15.0" fill="#3a9a08"/><rect x="826.7" y="839.7" width="18.8" height="16.5" fill="#3a9a08"/><rect x="826.7" y="866.0" width="18.8" height="15.0" fill="#3a9a08"/><rect x="871.0" y="866.0" width="12.0" height="15.0" fill="#3a9a08"/><rect x="826.7" y="895.0" width="18.8" height="16.0" fill="#3a9a08"/><rect x="856.0" y="895.0" width="13.4" height="16.0" fill="#3a9a08"/><rect x="891.0" y="857.0" width="11.4" height="24.7" fill="#3a9a08"/><rect x="911.4" y="863.7" width="11.2" height="18.0" fill="#3a9a08"/><rect x="941.4" y="865.0" width="18.6" height="16.0" fill="#3a9a08"/><rect x="883.7" y="893.7" width="15.0" height="17.9" fill="#3a9a08"/><rect x="920.0" y="893.7" width="10.9" height="17.9" fill="#3a9a08"/><rect x="944.4" y="893.7" width="15.6" height="17.9" fill="#3a9a08"/><rect x="943.0" y="929.6" width="19.0" height="15.8" fill="#3a9a08"/><rect x="919.0" y="929.6" width="15.0" height="15.8" fill="#3a9a08"/><rect x="889.0" y="928.0" width="15.7" height="18.9" fill="#3a9a08"/><rect x="822.2" y="943.0" width="15.8" height="30.0" fill="#3a9a08"/><rect x="859.7" y="943.0" width="15.7" height="30.0" fill="#3a9a08"/><rect x="889.0" y="958.8" width="25.4" height="17.2" fill="#3a9a08"/><rect x="918.0" y="958.8" width="16.0" height="17.2" fill="#3a9a08"/><rect x="943.0" y="958.8" width="18.6" height="17.2" fill="#3a9a08"/><rect x="893.4" y="987.0" width="21.0" height="25.0" fill="#3a9a08"/><rect x="940.0" y="987.0" width="21.0" height="25.0" fill="#3a9a08"/><rect x="968.0" y="820.0" width="2.0" height="15.0" fill="#3a9a08"/><rect x="822.2" y="1035.0" width="15.8" height="30.7" fill="#3a9a08"/><rect x="859.7" y="1035.0" width="15.7" height="30.7" fill="#3a9a08"/><rect x="868.7" y="1081.4" width="15.0" height="18.8" fill="#3a9a08"/><rect x="898.0" y="1081.0" width="15.6" height="19.0" fill="#3a9a08"/><rect x="828.2" y="1115.1" width="18.8" height="15.0" fill="#3a9a08"/><rect x="858.2" y="1115.0" width="18.0" height="15.0" fill="#3a9a08"/><rect x="889.7" y="1115.0" width="18.0" height="15.0" fill="#3a9a08"/><rect x="921.1" y="1115.0" width="17.9" height="15.0" fill="#3a9a08"/><rect x="828.0" y="1144.4" width="19.0" height="15.0" fill="#3a9a08"/><rect x="858.0" y="1144.4" width="18.0" height="15.0" fill="#3a9a08"/><rect x="890.0" y="1144.4" width="18.0" height="15.0" fill="#3a9a08"/><rect x="921.0" y="1144.4" width="18.0" height="15.0" fill="#3a9a08"/><rect x="832.0" y="1178.0" width="11.2" height="21.8" fill="#3a9a08"/><rect x="869.4" y="1178.0" width="11.3" height="21.8" fill="#3a9a08"/><rect x="887.4" y="1178.0" width="11.3" height="21.8" fill="#3a9a08"/><rect x="915.0" y="1178.0" width="15.0" height="21.8" fill="#3a9a08"/><rect x="945.0" y="1178.0" width="15.0" height="21.8" fill="#3a9a08"/><polyline points="845.0,817.0 858.0,817.0" fill="none" stroke="#3a9a08" stroke-width="6" stroke-linejoin="round" stroke-linecap="round" stroke-linejoin="miter" stroke-linecap="round"/><polyline points="836.0,856.0 836.0,866.0" fill="none" stroke="#3a9a08" stroke-width="6" stroke-linejoin="round" stroke-linecap="round" stroke-linejoin="miter" stroke-linecap="round"/><polyline points="845.0,873.0 872.0,873.0" fill="none" stroke="#3a9a08" stroke-width="6" stroke-linejoin="round" stroke-linecap="round" stroke-linejoin="miter" stroke-linecap="round"/><polyline points="845.0,903.0 857.0,903.0" fill="none" stroke="#3a9a08" stroke-width="6" stroke-linejoin="round" stroke-linecap="round" stroke-linejoin="miter" stroke-linecap="round"/><polyline points="922.0,873.0 942.0,873.0" fill="none" stroke="#3a9a08" stroke-width="6" stroke-linejoin="round" stroke-linecap="round" stroke-linejoin="miter" stroke-linecap="round"/><polyline points="898.0,902.0 921.0,902.0" fill="none" stroke="#3a9a08" stroke-width="6" stroke-linejoin="round" stroke-linecap="round" stroke-linejoin="miter" stroke-linecap="round"/><polyline points="911.0,881.0 925.0,893.0" fill="none" stroke="#3a9a08" stroke-width="6" stroke-linejoin="round" stroke-linecap="round" stroke-linejoin="miter" stroke-linecap="round"/><polyline points="952.0,911.0 952.0,930.0" fill="none" stroke="#3a9a08" stroke-width="6" stroke-linejoin="round" stroke-linecap="round" stroke-linejoin="miter" stroke-linecap="round"/><polyline points="926.0,911.0 926.0,930.0" fill="none" stroke="#3a9a08" stroke-width="6" stroke-linejoin="round" stroke-linecap="round" stroke-linejoin="miter" stroke-linecap="round"/><polyline points="876.5,860.0 876.5,917.6 908.4,917.6 911.0,925.0 911.0,969.0" fill="none" stroke="#3a9a08" stroke-width="6" stroke-linejoin="round" stroke-linecap="round" stroke-linejoin="miter" stroke-linecap="round"/><polyline points="827.5,943.0 827.5,929.6 880.0,929.6 889.0,939.0" fill="none" stroke="#3a9a08" stroke-width="6" stroke-linejoin="round" stroke-linecap="round" stroke-linejoin="miter" stroke-linecap="round"/><polyline points="867.0,973.0 867.0,985.0 880.0,997.0" fill="none" stroke="#3a9a08" stroke-width="6" stroke-linejoin="round" stroke-linecap="round" stroke-linejoin="miter" stroke-linecap="round"/><polyline points="934.0,967.0 943.0,967.0" fill="none" stroke="#3a9a08" stroke-width="6" stroke-linejoin="round" stroke-linecap="round" stroke-linejoin="miter" stroke-linecap="round"/><polyline points="830.0,1065.0 830.0,1075.0 847.0,1090.0" fill="none" stroke="#3a9a08" stroke-width="6" stroke-linejoin="round" stroke-linecap="round" stroke-linejoin="miter" stroke-linecap="round"/><circle cx="847" cy="1090.4" r="8" fill="#3a9a08" /><polyline points="847.0,1090.4 870.0,1090.4" fill="none" stroke="#3a9a08" stroke-width="6" stroke-linejoin="round" stroke-linecap="round" stroke-linejoin="miter" stroke-linecap="round"/><polyline points="875.0,1050.0 883.0,1050.0 908.4,1075.5 908.4,1088.0 950.0,1088.0 955.0,1100.0 955.0,1200.0" fill="none" stroke="#3a9a08" stroke-width="6" stroke-linejoin="round" stroke-linecap="round" stroke-linejoin="miter" stroke-linecap="round"/><polyline points="843.0,1095.0 840.0,1105.0 840.0,1250.0" fill="none" stroke="#3a9a08" stroke-width="6" stroke-linejoin="round" stroke-linecap="round" stroke-linejoin="miter" stroke-linecap="round"/><polyline points="847.0,1122.0 858.0,1122.0" fill="none" stroke="#3a9a08" stroke-width="6" stroke-linejoin="round" stroke-linecap="round" stroke-linejoin="miter" stroke-linecap="round"/><polyline points="876.0,1122.0 890.0,1122.0" fill="none" stroke="#3a9a08" stroke-width="6" stroke-linejoin="round" stroke-linecap="round" stroke-linejoin="miter" stroke-linecap="round"/><polyline points="838.0,1159.0 838.0,1178.0" fill="none" stroke="#3a9a08" stroke-width="6" stroke-linejoin="round" stroke-linecap="round" stroke-linejoin="miter" stroke-linecap="round"/><polyline points="868.0,1159.0 875.0,1178.0" fill="none" stroke="#3a9a08" stroke-width="6" stroke-linejoin="round" stroke-linecap="round" stroke-linejoin="miter" stroke-linecap="round"/><polyline points="898.0,1189.0 915.0,1189.0" fill="none" stroke="#3a9a08" stroke-width="6" stroke-linejoin="round" stroke-linecap="round" stroke-linejoin="miter" stroke-linecap="round"/><rect x="915.4" y="1235.4" width="14.9" height="18.0" fill="#3a9a08"/><rect x="915.4" y="1207.2" width="14.9" height="18.0" fill="#3a9a08"/><rect x="945.0" y="1207.0" width="14.2" height="18.0" fill="#3a9a08"/><rect x="945.0" y="1235.0" width="14.0" height="18.0" fill="#3a9a08"/><rect x="832.5" y="1262.7" width="10.9" height="21.2" fill="#3a9a08"/><rect x="850.5" y="1262.7" width="10.1" height="21.2" fill="#3a9a08"/><rect x="868.5" y="1262.7" width="11.7" height="21.2" fill="#3a9a08"/><rect x="887.2" y="1262.7" width="11.0" height="21.2" fill="#3a9a08"/><rect x="915.4" y="1262.7" width="14.9" height="21.2" fill="#3a9a08"/><rect x="945.0" y="1262.7" width="15.0" height="21.2" fill="#3a9a08"/><rect x="852.8" y="1299.5" width="14.9" height="18.0" fill="#3a9a08"/><rect x="867.7" y="1333.0" width="14.8" height="18.0" fill="#3a9a08"/><rect x="881.7" y="1299.5" width="15.7" height="18.0" fill="#3a9a08"/><rect x="896.6" y="1333.0" width="14.9" height="18.0" fill="#3a9a08"/><rect x="930.3" y="1327.7" width="18.7" height="14.8" fill="#3a9a08"/><rect x="930.3" y="1298.0" width="17.7" height="14.8" fill="#3a9a08"/><rect x="811.4" y="1349.6" width="20.3" height="21.9" fill="#3a9a08"/><rect x="845.8" y="1362.9" width="21.1" height="8.6" fill="#3a9a08"/><rect x="846.0" y="1380.0" width="21.0" height="8.7" fill="#3a9a08"/><rect x="892.7" y="1362.0" width="20.3" height="8.7" fill="#3a9a08"/><rect x="892.7" y="1380.0" width="20.3" height="8.0" fill="#3a9a08"/><rect x="952.0" y="1351.0" width="18.0" height="11.0" fill="#3a9a08"/><polyline points="855.0,1199.0 894.3,1243.2 916.0,1243.2" fill="none" stroke="#3a9a08" stroke-width="6" stroke-linejoin="round" stroke-linecap="round" stroke-linejoin="miter" stroke-linecap="round"/><polyline points="937.0,1215.0 937.0,1270.0" fill="none" stroke="#3a9a08" stroke-width="6" stroke-linejoin="round" stroke-linecap="round" stroke-linejoin="miter" stroke-linecap="round"/><circle cx="846.6" cy="1238.5" r="9" fill="#3a9a08" /><polyline points="846.6,1238.5 837.0,1250.0 837.0,1280.0" fill="none" stroke="#3a9a08" stroke-width="6" stroke-linejoin="round" stroke-linecap="round" stroke-linejoin="miter" stroke-linecap="round"/><polyline points="822.0,1360.0 845.0,1380.0 856.0,1380.0" fill="none" stroke="#3a9a08" stroke-width="7" stroke-linejoin="round" stroke-linecap="round" stroke-linejoin="miter" stroke-linecap="round"/><polyline points="856.0,1370.0 856.0,1380.0" fill="none" stroke="#3a9a08" stroke-width="7" stroke-linejoin="round" stroke-linecap="round" stroke-linejoin="miter" stroke-linecap="round"/><polyline points="903.0,1366.0 931.8,1391.8" fill="none" stroke="#3a9a08" stroke-width="6" stroke-linejoin="round" stroke-linecap="round" stroke-linejoin="miter" stroke-linecap="round"/><circle cx="931.8" cy="1391.8" r="8" fill="#3a9a08" /><polyline points="952.0,1320.0 970.0,1338.0" fill="none" stroke="#3a9a08" stroke-width="6" stroke-linejoin="round" stroke-linecap="round" stroke-linejoin="miter" stroke-linecap="round"/><polyline points="940.0,1342.0 970.0,1372.0" fill="none" stroke="#3a9a08" stroke-width="6" stroke-linejoin="round" stroke-linecap="round" stroke-linejoin="miter" stroke-linecap="round"/><polyline points="853.0,1345.0 874.0,1343.0 900.0,1318.0" fill="none" stroke="#3a9a08" stroke-width="4" stroke-linejoin="round" stroke-linecap="round" stroke-linejoin="miter" stroke-linecap="round"/><circle cx="848.1" cy="1334" r="10" fill="#3a9a08" /><circle cx="913" cy="1295.6" r="10" fill="#3a9a08" /></g>
<defs><mask id="clr" maskUnits="userSpaceOnUse" x="0" y="0" width="1706" height="1534"><rect x="0" y="0" width="1706" height="1534" fill="#fff"/><polyline points="718.4,426.8 769.0,477.0 770.0,557.0 826.7,616.7" fill="none" stroke="#000" stroke-width="19" stroke-linejoin="round" stroke-linecap="round" stroke-linejoin="miter" stroke-linecap="round"/><polyline points="769.0,477.0 970.0,477.0" fill="none" stroke="#000" stroke-width="19" stroke-linejoin="round" stroke-linecap="round" stroke-linejoin="miter" stroke-linecap="butt"/><circle cx="769" cy="477" r="15" fill="#000" /><circle cx="826.7" cy="616.7" r="15.5" fill="#000" /><circle cx="775.2" cy="440" r="13.5" fill="#000" /><polyline points="658.8,760.0 668.0,779.0 696.0,779.0" fill="none" stroke="#000" stroke-width="23" stroke-linejoin="round" stroke-linecap="round" stroke-linejoin="miter" stroke-linecap="round"/><polyline points="641.8,1004.0 663.5,1027.0" fill="none" stroke="#000" stroke-width="14" stroke-linejoin="round" stroke-linecap="round" stroke-linejoin="miter" stroke-linecap="round"/><circle cx="663.5" cy="1027" r="14" fill="#000" /><circle cx="800.4" cy="673.4" r="14" fill="#000" /><circle cx="800.4" cy="697.5" r="14" fill="#000" /><polyline points="800.4,697.5 841.9,740.6 970.0,740.6" fill="none" stroke="#000" stroke-width="15" stroke-linejoin="round" stroke-linecap="round" stroke-linejoin="miter" stroke-linecap="round"/><polyline points="800.4,673.4 856.0,729.0 970.0,729.0" fill="none" stroke="#000" stroke-width="15" stroke-linejoin="round" stroke-linecap="round" stroke-linejoin="miter" stroke-linecap="round"/><circle cx="848.1" cy="1334" r="14.5" fill="#000" /><circle cx="913" cy="1295.6" r="14.5" fill="#000" /><polyline points="848.0,1334.0 871.0,1334.0 913.0,1296.0" fill="none" stroke="#000" stroke-width="14" stroke-linejoin="round" stroke-linecap="round" stroke-linejoin="miter" stroke-linecap="round"/><circle cx="946.7" cy="594.7" r="13" fill="#000" /><circle cx="946.7" cy="667.8" r="13" fill="#000" /><circle cx="802.4" cy="515.4" r="13.2" fill="none" stroke="#000" stroke-width="4.5" stroke-dasharray="13.7 7" stroke-dashoffset="-3.5"/></mask></defs>
<path d="M950.7,590.2A6,6 0 1 0 950.7,599.2" fill="none" stroke="#000" stroke-width="3"/>
<path d="M950.7,663.3A6,6 0 1 0 950.7,672.3" fill="none" stroke="#000" stroke-width="3"/>
<g opacity="0.58"><g mask="url(#clr)"><polygon points="721.0,449.0 721.0,727.0 671.0,727.0 671.0,764.0 686.0,766.0 706.0,786.0 652.0,786.0 652.0,1004.0 641.0,1004.0 641.0,1169.0 676.0,1169.0 683.0,1163.0 683.0,1144.3 732.0,1144.3 741.0,1137.8 741.0,817.0 822.0,733.0 970.0,733.0 970.0,487.0 780.5,487.0 780.5,560.0 759.0,538.0 759.0,490.0 735.0,466.0" fill="#00a8ff" stroke="#40b8ff" stroke-width="1.2"/><polygon points="785.0,423.0 970.0,423.0 970.0,465.4 792.0,465.4 785.0,456.0" fill="#00a8ff" stroke="#40b8ff" stroke-width="1.2"/><polygon points="838.0,1194.0 970.0,1194.0 970.0,1399.6 777.0,1399.6 777.0,1346.4 837.2,1287.0" fill="#00a8ff" stroke="#40b8ff" stroke-width="1.2"/></g><polyline points="970.0,810.5 883.2,810.5 810.2,883.5 810.2,1284.0 743.0,1351.0 743.0,1392.0 767.0,1416.0 970.0,1416.0" fill="none" stroke="#00a8ff" stroke-width="18" stroke-linejoin="round" stroke-linecap="round" stroke-linejoin="miter" stroke-linecap="butt"/><polyline points="970.0,839.7 904.1,839.7 847.0,896.8 847.0,1200.0" fill="none" stroke="#00a8ff" stroke-width="18" stroke-linejoin="round" stroke-linecap="round" stroke-linejoin="miter" stroke-linecap="butt"/><polyline points="800.4,697.5 841.9,740.6 970.0,740.6" fill="none" stroke="#00a8ff" stroke-width="5.6" stroke-linejoin="round" stroke-linecap="round" stroke-linejoin="miter" stroke-linecap="round"/><polyline points="800.4,673.4 856.0,729.0 970.0,729.0" fill="none" stroke="#00a8ff" stroke-width="5.6" stroke-linejoin="round" stroke-linecap="round" stroke-linejoin="miter" stroke-linecap="round"/><circle cx="800.4" cy="673.4" r="9" fill="#00a8ff" /><circle cx="800.4" cy="697.5" r="9" fill="#00a8ff" /><circle cx="848.1" cy="1334" r="9" fill="#00a8ff" /><circle cx="913" cy="1295.6" r="9" fill="#00a8ff" /><polyline points="848.0,1334.0 871.0,1334.0 913.0,1296.0" fill="none" stroke="#00a8ff" stroke-width="6" stroke-linejoin="round" stroke-linecap="round" stroke-linejoin="miter" stroke-linecap="round"/></g>
<g opacity="0.78"><text transform="translate(968,1097) scale(-1,1)" font-family="Liberation Sans" fill="#00a8ff" stroke="#00a8ff" stroke-width="1.5" font-size="27">5922=</text><text transform="translate(968,1138.5) scale(-1,1)" font-family="Liberation Sans" fill="#00a8ff" stroke="#00a8ff" stroke-width="1.5" font-size="27">МСИ</text><text transform="translate(968,1172) scale(-1,1)" font-family="Liberation Sans" fill="#00a8ff" stroke="#00a8ff" stroke-width="1.5" font-size="27">20.09.16</text><circle cx="636.8" cy="1373.6" r="23.5" fill="none" stroke="#00a8ff" stroke-width="4.5" /><rect x="632.40" y="1366.00" width="9.60" height="8.40" rx="4.20" fill="none" stroke="#00a8ff" stroke-width="3.4"/><rect x="631.20" y="1374.40" width="12.00" height="11.60" rx="5.04" fill="none" stroke="#00a8ff" stroke-width="3.4"/><g transform="translate(588,1414) scale(0.478,0.5)"><path d="M226,9 C226,3 220.5,0 215.0,0 C208.84,0 204,4 204,10 C204,15 206,17 210,21 L226,33 L204,33 M175,0 H189 L194,8 V25 L189,33 H175 L170,25 V8 Z M174,9 L189,26 M128,33 V0 L135,8 M107,9 C107,3 101.75,0 96.5,0 C90.62,0 86,4 86,10 C86,15 88,17 92,21 L107,33 L86,33 M40,0 H52 L57,8 V25 L52,33 H40 L35,25 V8 Z M39,9 L52,26 M0,0 H24 M1.5,2 L18,33" fill="none" stroke="#00a8ff" stroke-width="3.6" stroke-linecap="round" stroke-linejoin="round" vector-effect="non-scaling-stroke"/><ellipse cx="156" cy="31.5" rx="4.14" ry="3.96" fill="#00a8ff"/><ellipse cx="72" cy="31.5" rx="4.14" ry="3.96" fill="#00a8ff"/></g></g>
<polyline points="611.0,1240.0 611.0,426.6 653.3,384.1 970.0,384.1" fill="none" stroke="#00aaff" stroke-width="13" stroke-linejoin="round" stroke-linecap="round" stroke-linejoin="miter" stroke-linecap="butt"/><polyline points="611.0,1236.0 657.0,1287.0 736.0,1287.0" fill="none" stroke="#00aaff" stroke-width="12.5" stroke-linejoin="round" stroke-linecap="round" stroke-linejoin="miter" stroke-linecap="butt"/><polyline points="629.6,1172.0 629.6,435.9 665.1,400.4 970.0,400.4" fill="none" stroke="#00aaff" stroke-width="10.6" stroke-linejoin="round" stroke-linecap="round" stroke-linejoin="miter" stroke-linecap="butt"/><polyline points="629.6,1170.0 675.0,1216.0 699.0,1216.0" fill="none" stroke="#00aaff" stroke-width="10.6" stroke-linejoin="round" stroke-linecap="round" stroke-linejoin="miter" stroke-linecap="butt"/><polyline points="641.8,1005.0 641.8,446.0 674.0,413.7 970.0,413.7" fill="none" stroke="#00aaff" stroke-width="7.8" stroke-linejoin="round" stroke-linecap="round" stroke-linejoin="miter" stroke-linecap="butt"/><polyline points="641.8,1004.0 663.5,1027.0" fill="none" stroke="#00aaff" stroke-width="7.8" stroke-linejoin="round" stroke-linecap="round" stroke-linejoin="miter" stroke-linecap="round"/><polyline points="658.8,770.0 658.8,445.0 677.0,426.8 718.4,426.8 769.0,477.0 770.0,557.0 826.7,616.7" fill="none" stroke="#00aaff" stroke-width="12.4" stroke-linejoin="round" stroke-linecap="round" stroke-linejoin="miter" stroke-linecap="butt"/><polyline points="658.8,766.0 668.0,779.0 696.0,779.0" fill="none" stroke="#00aaff" stroke-width="12" stroke-linejoin="round" stroke-linecap="round" stroke-linejoin="miter" stroke-linecap="round"/><polyline points="769.0,477.0 970.0,477.0" fill="none" stroke="#00aaff" stroke-width="9.6" stroke-linejoin="round" stroke-linecap="round" stroke-linejoin="miter" stroke-linecap="butt"/><polyline points="775.2,414.0 775.2,440.0" fill="none" stroke="#00aaff" stroke-width="5" stroke-linejoin="round" stroke-linecap="round" stroke-linejoin="miter" stroke-linecap="round"/><circle cx="610.5" cy="1117" r="9.5" fill="#00aaff" /><circle cx="610.5" cy="1140.4" r="9.5" fill="#00aaff" /><circle cx="769" cy="477" r="11" fill="#00aaff" /><circle cx="826.7" cy="616.7" r="12" fill="#00aaff" /><circle cx="775.2" cy="440" r="9.5" fill="#00aaff" /><circle cx="668" cy="779" r="9.5" fill="#00aaff" /><circle cx="696" cy="779" r="9.5" fill="#00aaff" /><circle cx="663.5" cy="1027" r="11" fill="#00aaff" /><circle cx="699" cy="1287" r="12" fill="#00aaff" /><circle cx="736.5" cy="1287" r="12" fill="#00aaff" /><circle cx="699" cy="486" r="8.8" fill="none" stroke="#00aaff" stroke-width="6.6" /><circle cx="699" cy="486" r="5.5" fill="#000" /><polyline points="699.0,486.0 705.0,486.0" fill="none" stroke="#55ff00" stroke-width="4" stroke-linejoin="round" stroke-linecap="round" stroke-linejoin="miter" stroke-linecap="round"/><circle cx="699" cy="523" r="8.8" fill="none" stroke="#00aaff" stroke-width="6.6" /><circle cx="699" cy="523" r="5.5" fill="#000" /><polyline points="699.0,523.0 705.0,523.0" fill="none" stroke="#55ff00" stroke-width="4" stroke-linejoin="round" stroke-linecap="round" stroke-linejoin="miter" stroke-linecap="round"/><circle cx="699" cy="559" r="8.8" fill="none" stroke="#00aaff" stroke-width="6.6" /><circle cx="699" cy="559" r="5.5" fill="#000" /><polyline points="699.0,559.0 705.0,559.0" fill="none" stroke="#55ff00" stroke-width="4" stroke-linejoin="round" stroke-linecap="round" stroke-linejoin="miter" stroke-linecap="round"/><circle cx="699" cy="596" r="8.8" fill="none" stroke="#00aaff" stroke-width="6.6" /><circle cx="699" cy="596" r="5.5" fill="#000" /><polyline points="699.0,596.0 705.0,596.0" fill="none" stroke="#55ff00" stroke-width="4" stroke-linejoin="round" stroke-linecap="round" stroke-linejoin="miter" stroke-linecap="round"/><circle cx="699" cy="632.8" r="8.8" fill="none" stroke="#1aa09a" stroke-width="6.6" /><circle cx="699" cy="632.8" r="5.5" fill="#000" /><polyline points="699.0,627.0 699.0,638.0" fill="none" stroke="#55ff00" stroke-width="4" stroke-linejoin="round" stroke-linecap="round" stroke-linejoin="miter" stroke-linecap="round"/><circle cx="699" cy="669" r="8.8" fill="none" stroke="#1aa09a" stroke-width="6.6" /><circle cx="699" cy="669" r="5.5" fill="#000" /><polyline points="695.0,665.0 705.0,675.0" fill="none" stroke="#3a9a08" stroke-width="4" stroke-linejoin="round" stroke-linecap="round" stroke-linejoin="miter" stroke-linecap="round"/><circle cx="699" cy="706" r="8.8" fill="none" stroke="#1aa09a" stroke-width="6.6" /><circle cx="699" cy="706" r="5.5" fill="#000" /><polyline points="695.0,702.0 705.0,712.0" fill="none" stroke="#3a9a08" stroke-width="4" stroke-linejoin="round" stroke-linecap="round" stroke-linejoin="miter" stroke-linecap="round"/><rect x="687.0" y="437.0" width="24.0" height="24.0" fill="#1aa09a"/><circle cx="699" cy="449" r="6" fill="#000" /><polyline points="696.0,446.0 706.0,455.0" fill="none" stroke="#3a9a08" stroke-width="4.5" stroke-linejoin="round" stroke-linecap="round" stroke-linejoin="miter" stroke-linecap="round"/><circle cx="699" cy="1176" r="8.8" fill="none" stroke="#1aa09a" stroke-width="6.6" /><circle cx="699" cy="1176" r="5.5" fill="#000" /><polyline points="699.0,1168.0 699.0,1176.0" fill="none" stroke="#3a9a08" stroke-width="4" stroke-linejoin="round" stroke-linecap="round" stroke-linejoin="miter" stroke-linecap="round"/><rect x="724.0" y="1164.0" width="24.0" height="24.0" fill="#1aa09a"/><circle cx="736" cy="1176" r="6" fill="#000" /><polyline points="734.0,1178.0 740.0,1172.0" fill="none" stroke="#3a9a08" stroke-width="4" stroke-linejoin="round" stroke-linecap="round" stroke-linejoin="miter" stroke-linecap="round"/><circle cx="699" cy="1213" r="8.8" fill="none" stroke="#00aaff" stroke-width="6.6" /><circle cx="699" cy="1213" r="5.5" fill="#000" /><circle cx="736" cy="1213" r="8.8" fill="none" stroke="#1aa09a" stroke-width="6.6" /><circle cx="736" cy="1213" r="5.5" fill="#000" /><polyline points="730.0,1207.0 738.0,1215.0" fill="none" stroke="#3a9a08" stroke-width="4" stroke-linejoin="round" stroke-linecap="round" stroke-linejoin="miter" stroke-linecap="round"/><circle cx="699" cy="1250" r="8.8" fill="none" stroke="#1aa09a" stroke-width="6.6" /><circle cx="699" cy="1250" r="5.5" fill="#3a9a08" /><circle cx="736" cy="1250" r="9" fill="#1aa09a" /><path d="M731.5,1250H740.5M736,1245.5V1254.5" stroke="#000" stroke-width="1.2"/><circle cx="736" cy="1250" r="4.2" fill="none" stroke="#000" stroke-width="1.2" /><circle cx="699" cy="1324" r="9" fill="#1aa09a" /><path d="M694.5,1324H703.5M699,1319.5V1328.5" stroke="#000" stroke-width="1.2"/><circle cx="699" cy="1324" r="4.2" fill="none" stroke="#000" stroke-width="1.2" /><circle cx="736" cy="1324" r="9" fill="#1aa09a" /><path d="M731.5,1324H740.5M736,1319.5V1328.5" stroke="#000" stroke-width="1.2"/><circle cx="736" cy="1324" r="4.2" fill="none" stroke="#000" stroke-width="1.2" /><circle cx="699" cy="1287" r="8.8" fill="none" stroke="#00aaff" stroke-width="6.6" /><circle cx="736.5" cy="1287" r="8.8" fill="none" stroke="#00aaff" stroke-width="6.6" /><circle cx="699" cy="1361" r="8.8" fill="none" stroke="#1aa09a" stroke-width="6.6" /><circle cx="699" cy="1361" r="5.5" fill="#3a9a08" /><circle cx="736" cy="1361" r="8.8" fill="none" stroke="#1aa09a" stroke-width="6.6" /><circle cx="736" cy="1361" r="5.5" fill="#1aa09a" />
<path d="M1706,305 H515 V432 H573 A14,14 0 0 1 587,446 V1348 A14,14 0 0 1 573,1362 H515 V1490 H1706" fill="none" stroke="#ff1020" stroke-width="1.8"/>
<line x1="515" y1="432" x2="515" y2="1362" stroke="#8a3aa0" stroke-width="1.5"/>
<line x1="888.7" y1="118" x2="888.7" y2="1534" stroke="#b01018" stroke-width="1.1"/>
<line x1="380" y1="692.8" x2="1706" y2="692.8" stroke="#b01018" stroke-width="1.1"/>
<circle cx="544" cy="337" r="16.35" fill="none" stroke="#1eb4c8" stroke-width="4.5" /><path d="M527.65,337H560.35M544,320.65V353.35" stroke="#1eb4c8" stroke-width="2.5"/>
<circle cx="544" cy="1456.8" r="16.35" fill="none" stroke="#1eb4c8" stroke-width="4.5" /><path d="M527.65,1456.8H560.35M544,1440.45V1473.1499999999999" stroke="#1eb4c8" stroke-width="2.5"/>
<path d="M384,118h1v1416h-1zM399,118h1v1416h-1zM413,118h1v1416h-1zM428,118h1v1416h-1zM457,118h1v1416h-1zM472,118h1v1416h-1zM486,118h1v1416h-1zM501,118h1v1416h-1zM530,118h1v1416h-1zM544,118h1v1416h-1zM559,118h1v1416h-1zM573,118h1v1416h-1zM602,118h1v1416h-1zM617,118h1v1416h-1zM631,118h1v1416h-1zM646,118h1v1416h-1zM675,118h1v1416h-1zM689,118h1v1416h-1zM704,118h1v1416h-1zM719,118h1v1416h-1zM748,118h1v1416h-1zM762,118h1v1416h-1zM777,118h1v1416h-1zM791,118h1v1416h-1zM820,118h1v1416h-1zM835,118h1v1416h-1zM849,118h1v1416h-1zM864,118h1v1416h-1zM893,118h1v1416h-1zM907,118h1v1416h-1zM922,118h1v1416h-1zM937,118h1v1416h-1zM966,118h1v1416h-1zM980,118h1v1416h-1zM995,118h1v1416h-1zM1009,118h1v1416h-1zM1038,118h1v1416h-1zM1053,118h1v1416h-1zM1067,118h1v1416h-1zM1082,118h1v1416h-1zM1111,118h1v1416h-1zM1125,118h1v1416h-1zM1140,118h1v1416h-1zM1155,118h1v1416h-1zM1184,118h1v1416h-1zM1198,118h1v1416h-1zM1213,118h1v1416h-1zM1227,118h1v1416h-1zM1256,118h1v1416h-1zM1271,118h1v1416h-1zM1285,118h1v1416h-1zM1300,118h1v1416h-1zM1329,118h1v1416h-1zM1343,118h1v1416h-1zM1358,118h1v1416h-1zM1373,118h1v1416h-1zM1402,118h1v1416h-1zM1416,118h1v1416h-1zM1431,118h1v1416h-1zM1445,118h1v1416h-1zM1474,118h1v1416h-1zM1489,118h1v1416h-1zM1503,118h1v1416h-1zM1518,118h1v1416h-1zM1547,118h1v1416h-1zM1561,118h1v1416h-1zM1576,118h1v1416h-1zM1591,118h1v1416h-1zM1620,118h1v1416h-1zM1634,118h1v1416h-1zM1649,118h1v1416h-1zM1663,118h1v1416h-1zM1692,118h1v1416h-1zM381,126h1325v1h-1325zM381,140h1325v1h-1325zM381,155h1325v1h-1325zM381,184h1325v1h-1325zM381,199h1325v1h-1325zM381,213h1325v1h-1325zM381,228h1325v1h-1325zM381,257h1325v1h-1325zM381,271h1325v1h-1325zM381,286h1325v1h-1325zM381,300h1325v1h-1325zM381,329h1325v1h-1325zM381,344h1325v1h-1325zM381,358h1325v1h-1325zM381,373h1325v1h-1325zM381,402h1325v1h-1325zM381,417h1325v1h-1325zM381,431h1325v1h-1325zM381,446h1325v1h-1325zM381,475h1325v1h-1325zM381,489h1325v1h-1325zM381,504h1325v1h-1325zM381,518h1325v1h-1325zM381,547h1325v1h-1325zM381,562h1325v1h-1325zM381,576h1325v1h-1325zM381,591h1325v1h-1325zM381,620h1325v1h-1325zM381,635h1325v1h-1325zM381,649h1325v1h-1325zM381,664h1325v1h-1325zM381,693h1325v1h-1325zM381,707h1325v1h-1325zM381,722h1325v1h-1325zM381,736h1325v1h-1325zM381,765h1325v1h-1325zM381,780h1325v1h-1325zM381,794h1325v1h-1325zM381,809h1325v1h-1325zM381,838h1325v1h-1325zM381,853h1325v1h-1325zM381,867h1325v1h-1325zM381,882h1325v1h-1325zM381,911h1325v1h-1325zM381,925h1325v1h-1325zM381,940h1325v1h-1325zM381,954h1325v1h-1325zM381,983h1325v1h-1325zM381,998h1325v1h-1325zM381,1012h1325v1h-1325zM381,1027h1325v1h-1325zM381,1056h1325v1h-1325zM381,1071h1325v1h-1325zM381,1085h1325v1h-1325zM381,1100h1325v1h-1325zM381,1129h1325v1h-1325zM381,1143h1325v1h-1325zM381,1158h1325v1h-1325zM381,1172h1325v1h-1325zM381,1201h1325v1h-1325zM381,1216h1325v1h-1325zM381,1230h1325v1h-1325zM381,1245h1325v1h-1325zM381,1274h1325v1h-1325zM381,1289h1325v1h-1325zM381,1303h1325v1h-1325zM381,1318h1325v1h-1325zM381,1347h1325v1h-1325zM381,1361h1325v1h-1325zM381,1376h1325v1h-1325zM381,1390h1325v1h-1325zM381,1419h1325v1h-1325zM381,1434h1325v1h-1325zM381,1448h1325v1h-1325zM381,1463h1325v1h-1325zM381,1492h1325v1h-1325zM381,1507h1325v1h-1325zM381,1521h1325v1h-1325z" fill="#5c5c5c" fill-opacity="0.29" shape-rendering="crispEdges"/>
<path d="M442,118h1v1416h-1zM588,118h1v1416h-1zM733,118h1v1416h-1zM878,118h1v1416h-1zM1024,118h1v1416h-1zM1169,118h1v1416h-1zM1314,118h1v1416h-1zM1460,118h1v1416h-1zM1605,118h1v1416h-1zM381,170h1325v1h-1325zM381,315h1325v1h-1325zM381,460h1325v1h-1325zM381,606h1325v1h-1325zM381,751h1325v1h-1325zM381,896h1325v1h-1325zM381,1042h1325v1h-1325zM381,1187h1325v1h-1325zM381,1332h1325v1h-1325zM381,1478h1325v1h-1325z" fill="#5c5c5c" fill-opacity="0.44" shape-rendering="crispEdges"/>
<path d="M515,118h1v1416h-1zM660,118h1v1416h-1zM806,118h1v1416h-1zM951,118h1v1416h-1zM1096,118h1v1416h-1zM1242,118h1v1416h-1zM1387,118h1v1416h-1zM1532,118h1v1416h-1zM1678,118h1v1416h-1zM381,242h1325v1h-1325zM381,388h1325v1h-1325zM381,533h1325v1h-1325zM381,678h1325v1h-1325zM381,824h1325v1h-1325zM381,969h1325v1h-1325zM381,1114h1325v1h-1325zM381,1260h1325v1h-1325zM381,1405h1325v1h-1325z" fill="#5c5c5c" fill-opacity="0.92" shape-rendering="crispEdges"/>
<rect x="356" y="118" width="24" height="1416" fill="#0b0b0b" />
<line x1="371" y1="126.4" x2="380" y2="126.4" stroke="#8a8a8a" stroke-width="1"/>
<line x1="371" y1="141.0" x2="380" y2="141.0" stroke="#8a8a8a" stroke-width="1"/>
<line x1="371" y1="155.5" x2="380" y2="155.5" stroke="#8a8a8a" stroke-width="1"/>
<line x1="364" y1="170.0" x2="380" y2="170.0" stroke="#20e020" stroke-width="1.3"/>
<line x1="371" y1="184.6" x2="380" y2="184.6" stroke="#8a8a8a" stroke-width="1"/>
<line x1="371" y1="199.1" x2="380" y2="199.1" stroke="#8a8a8a" stroke-width="1"/>
<line x1="371" y1="213.6" x2="380" y2="213.6" stroke="#8a8a8a" stroke-width="1"/>
<line x1="371" y1="228.2" x2="380" y2="228.2" stroke="#8a8a8a" stroke-width="1"/>
<line x1="356" y1="242.7" x2="380" y2="242.7" stroke="#ff1010" stroke-width="1.6"/>
<line x1="371" y1="257.2" x2="380" y2="257.2" stroke="#8a8a8a" stroke-width="1"/>
<line x1="371" y1="271.8" x2="380" y2="271.8" stroke="#8a8a8a" stroke-width="1"/>
<line x1="371" y1="286.3" x2="380" y2="286.3" stroke="#8a8a8a" stroke-width="1"/>
<line x1="371" y1="300.8" x2="380" y2="300.8" stroke="#8a8a8a" stroke-width="1"/>
<line x1="364" y1="315.4" x2="380" y2="315.4" stroke="#20e020" stroke-width="1.3"/>
<line x1="371" y1="329.9" x2="380" y2="329.9" stroke="#8a8a8a" stroke-width="1"/>
<line x1="371" y1="344.4" x2="380" y2="344.4" stroke="#8a8a8a" stroke-width="1"/>
<line x1="371" y1="359.0" x2="380" y2="359.0" stroke="#8a8a8a" stroke-width="1"/>
<line x1="371" y1="373.5" x2="380" y2="373.5" stroke="#8a8a8a" stroke-width="1"/>
<line x1="356" y1="388.0" x2="380" y2="388.0" stroke="#ff1010" stroke-width="1.6"/>
<line x1="371" y1="402.6" x2="380" y2="402.6" stroke="#8a8a8a" stroke-width="1"/>
<line x1="371" y1="417.1" x2="380" y2="417.1" stroke="#8a8a8a" stroke-width="1"/>
<line x1="371" y1="431.6" x2="380" y2="431.6" stroke="#8a8a8a" stroke-width="1"/>
<line x1="371" y1="446.2" x2="380" y2="446.2" stroke="#8a8a8a" stroke-width="1"/>
<line x1="364" y1="460.7" x2="380" y2="460.7" stroke="#20e020" stroke-width="1.3"/>
<line x1="371" y1="475.2" x2="380" y2="475.2" stroke="#8a8a8a" stroke-width="1"/>
<line x1="371" y1="489.8" x2="380" y2="489.8" stroke="#8a8a8a" stroke-width="1"/>
<line x1="371" y1="504.3" x2="380" y2="504.3" stroke="#8a8a8a" stroke-width="1"/>
<line x1="371" y1="518.8" x2="380" y2="518.8" stroke="#8a8a8a" stroke-width="1"/>
<line x1="356" y1="533.4" x2="380" y2="533.4" stroke="#ff1010" stroke-width="1.6"/>
<line x1="371" y1="547.9" x2="380" y2="547.9" stroke="#8a8a8a" stroke-width="1"/>
<line x1="371" y1="562.4" x2="380" y2="562.4" stroke="#8a8a8a" stroke-width="1"/>
<line x1="371" y1="577.0" x2="380" y2="577.0" stroke="#8a8a8a" stroke-width="1"/>
<line x1="371" y1="591.5" x2="380" y2="591.5" stroke="#8a8a8a" stroke-width="1"/>
<line x1="364" y1="606.0" x2="380" y2="606.0" stroke="#20e020" stroke-width="1.3"/>
<line x1="371" y1="620.6" x2="380" y2="620.6" stroke="#8a8a8a" stroke-width="1"/>
<line x1="371" y1="635.1" x2="380" y2="635.1" stroke="#8a8a8a" stroke-width="1"/>
<line x1="371" y1="649.6" x2="380" y2="649.6" stroke="#8a8a8a" stroke-width="1"/>
<line x1="371" y1="664.2" x2="380" y2="664.2" stroke="#8a8a8a" stroke-width="1"/>
<line x1="356" y1="678.7" x2="380" y2="678.7" stroke="#ff1010" stroke-width="1.6"/>
<line x1="371" y1="693.2" x2="380" y2="693.2" stroke="#8a8a8a" stroke-width="1"/>
<line x1="371" y1="707.8" x2="380" y2="707.8" stroke="#8a8a8a" stroke-width="1"/>
<line x1="371" y1="722.3" x2="380" y2="722.3" stroke="#8a8a8a" stroke-width="1"/>
<line x1="371" y1="736.8" x2="380" y2="736.8" stroke="#8a8a8a" stroke-width="1"/>
<line x1="364" y1="751.4" x2="380" y2="751.4" stroke="#20e020" stroke-width="1.3"/>
<line x1="371" y1="765.9" x2="380" y2="765.9" stroke="#8a8a8a" stroke-width="1"/>
<line x1="371" y1="780.4" x2="380" y2="780.4" stroke="#8a8a8a" stroke-width="1"/>
<line x1="371" y1="795.0" x2="380" y2="795.0" stroke="#8a8a8a" stroke-width="1"/>
<line x1="371" y1="809.5" x2="380" y2="809.5" stroke="#8a8a8a" stroke-width="1"/>
<line x1="356" y1="824.0" x2="380" y2="824.0" stroke="#ff1010" stroke-width="1.6"/>
<line x1="371" y1="838.6" x2="380" y2="838.6" stroke="#8a8a8a" stroke-width="1"/>
<line x1="371" y1="853.1" x2="380" y2="853.1" stroke="#8a8a8a" stroke-width="1"/>
<line x1="371" y1="867.6" x2="380" y2="867.6" stroke="#8a8a8a" stroke-width="1"/>
<line x1="371" y1="882.2" x2="380" y2="882.2" stroke="#8a8a8a" stroke-width="1"/>
<line x1="364" y1="896.7" x2="380" y2="896.7" stroke="#20e020" stroke-width="1.3"/>
<line x1="371" y1="911.2" x2="380" y2="911.2" stroke="#8a8a8a" stroke-width="1"/>
<line x1="371" y1="925.8" x2="380" y2="925.8" stroke="#8a8a8a" stroke-width="1"/>
<line x1="371" y1="940.3" x2="380" y2="940.3" stroke="#8a8a8a" stroke-width="1"/>
<line x1="371" y1="954.8" x2="380" y2="954.8" stroke="#8a8a8a" stroke-width="1"/>
<line x1="356" y1="969.4" x2="380" y2="969.4" stroke="#ff1010" stroke-width="1.6"/>
<line x1="371" y1="983.9" x2="380" y2="983.9" stroke="#8a8a8a" stroke-width="1"/>
<line x1="371" y1="998.4" x2="380" y2="998.4" stroke="#8a8a8a" stroke-width="1"/>
<line x1="371" y1="1013.0" x2="380" y2="1013.0" stroke="#8a8a8a" stroke-width="1"/>
<line x1="371" y1="1027.5" x2="380" y2="1027.5" stroke="#8a8a8a" stroke-width="1"/>
<line x1="364" y1="1042.0" x2="380" y2="1042.0" stroke="#20e020" stroke-width="1.3"/>
<line x1="371" y1="1056.6" x2="380" y2="1056.6" stroke="#8a8a8a" stroke-width="1"/>
<line x1="371" y1="1071.1" x2="380" y2="1071.1" stroke="#8a8a8a" stroke-width="1"/>
<line x1="371" y1="1085.6" x2="380" y2="1085.6" stroke="#8a8a8a" stroke-width="1"/>
<line x1="371" y1="1100.2" x2="380" y2="1100.2" stroke="#8a8a8a" stroke-width="1"/>
<line x1="356" y1="1114.7" x2="380" y2="1114.7" stroke="#ff1010" stroke-width="1.6"/>
<line x1="371" y1="1129.2" x2="380" y2="1129.2" stroke="#8a8a8a" stroke-width="1"/>
<line x1="371" y1="1143.8" x2="380" y2="1143.8" stroke="#8a8a8a" stroke-width="1"/>
<line x1="371" y1="1158.3" x2="380" y2="1158.3" stroke="#8a8a8a" stroke-width="1"/>
<line x1="371" y1="1172.8" x2="380" y2="1172.8" stroke="#8a8a8a" stroke-width="1"/>
<line x1="364" y1="1187.4" x2="380" y2="1187.4" stroke="#20e020" stroke-width="1.3"/>
<line x1="371" y1="1201.9" x2="380" y2="1201.9" stroke="#8a8a8a" stroke-width="1"/>
<line x1="371" y1="1216.4" x2="380" y2="1216.4" stroke="#8a8a8a" stroke-width="1"/>
<line x1="371" y1="1231.0" x2="380" y2="1231.0" stroke="#8a8a8a" stroke-width="1"/>
<line x1="371" y1="1245.5" x2="380" y2="1245.5" stroke="#8a8a8a" stroke-width="1"/>
<line x1="356" y1="1260.0" x2="380" y2="1260.0" stroke="#ff1010" stroke-width="1.6"/>
<line x1="371" y1="1274.6" x2="380" y2="1274.6" stroke="#8a8a8a" stroke-width="1"/>
<line x1="371" y1="1289.1" x2="380" y2="1289.1" stroke="#8a8a8a" stroke-width="1"/>
<line x1="371" y1="1303.6" x2="380" y2="1303.6" stroke="#8a8a8a" stroke-width="1"/>
<line x1="371" y1="1318.2" x2="380" y2="1318.2" stroke="#8a8a8a" stroke-width="1"/>
<line x1="364" y1="1332.7" x2="380" y2="1332.7" stroke="#20e020" stroke-width="1.3"/>
<line x1="371" y1="1347.2" x2="380" y2="1347.2" stroke="#8a8a8a" stroke-width="1"/>
<line x1="371" y1="1361.8" x2="380" y2="1361.8" stroke="#8a8a8a" stroke-width="1"/>
<line x1="371" y1="1376.3" x2="380" y2="1376.3" stroke="#8a8a8a" stroke-width="1"/>
<line x1="371" y1="1390.8" x2="380" y2="1390.8" stroke="#8a8a8a" stroke-width="1"/>
<line x1="356" y1="1405.4" x2="380" y2="1405.4" stroke="#ff1010" stroke-width="1.6"/>
<line x1="371" y1="1419.9" x2="380" y2="1419.9" stroke="#8a8a8a" stroke-width="1"/>
<line x1="371" y1="1434.4" x2="380" y2="1434.4" stroke="#8a8a8a" stroke-width="1"/>
<line x1="371" y1="1449.0" x2="380" y2="1449.0" stroke="#8a8a8a" stroke-width="1"/>
<line x1="371" y1="1463.5" x2="380" y2="1463.5" stroke="#8a8a8a" stroke-width="1"/>
<line x1="364" y1="1478.0" x2="380" y2="1478.0" stroke="#20e020" stroke-width="1.3"/>
<line x1="371" y1="1492.6" x2="380" y2="1492.6" stroke="#8a8a8a" stroke-width="1"/>
<line x1="371" y1="1507.1" x2="380" y2="1507.1" stroke="#8a8a8a" stroke-width="1"/>
<line x1="371" y1="1521.6" x2="380" y2="1521.6" stroke="#8a8a8a" stroke-width="1"/>
<line x1="380.6" y1="118" x2="380.6" y2="1534" stroke="#ff1010" stroke-width="1.5"/>
<text x="0" y="0" transform="translate(376.8,168.0) rotate(-90)" font-size="19.5" fill="#fff" font-family="Liberation Sans">+165</text>
<text x="0" y="0" transform="translate(376.8,240.7) rotate(-90)" font-size="19.5" fill="#fff" font-family="Liberation Sans">+160</text>
<text x="0" y="0" transform="translate(376.8,313.4) rotate(-90)" font-size="19.5" fill="#fff" font-family="Liberation Sans">+155</text>
<text x="0" y="0" transform="translate(376.8,386.0) rotate(-90)" font-size="19.5" fill="#fff" font-family="Liberation Sans">+150</text>
<text x="0" y="0" transform="translate(376.8,458.7) rotate(-90)" font-size="19.5" fill="#fff" font-family="Liberation Sans">+145</text>
<text x="0" y="0" transform="translate(376.8,531.4) rotate(-90)" font-size="19.5" fill="#fff" font-family="Liberation Sans">+140</text>
<text x="0" y="0" transform="translate(376.8,604.0) rotate(-90)" font-size="19.5" fill="#fff" font-family="Liberation Sans">+135</text>
<text x="0" y="0" transform="translate(376.8,676.7) rotate(-90)" font-size="19.5" fill="#fff" font-family="Liberation Sans">+130</text>
<text x="0" y="0" transform="translate(376.8,749.4) rotate(-90)" font-size="19.5" fill="#fff" font-family="Liberation Sans">+125</text>
<text x="0" y="0" transform="translate(376.8,822.0) rotate(-90)" font-size="19.5" fill="#fff" font-family="Liberation Sans">+120</text>
<text x="0" y="0" transform="translate(376.8,894.7) rotate(-90)" font-size="19.5" fill="#fff" font-family="Liberation Sans">+115</text>
<text x="0" y="0" transform="translate(376.8,967.4) rotate(-90)" font-size="19.5" fill="#fff" font-family="Liberation Sans">+110</text>
<text x="0" y="0" transform="translate(376.8,1040.0) rotate(-90)" font-size="19.5" fill="#fff" font-family="Liberation Sans">+105</text>
<text x="0" y="0" transform="translate(376.8,1112.7) rotate(-90)" font-size="19.5" fill="#fff" font-family="Liberation Sans">+100</text>
<text x="0" y="0" transform="translate(376.8,1185.4) rotate(-90)" font-size="19.5" fill="#fff" font-family="Liberation Sans">+95</text>
<text x="0" y="0" transform="translate(376.8,1258.0) rotate(-90)" font-size="19.5" fill="#fff" font-family="Liberation Sans">+90</text>
<text x="0" y="0" transform="translate(376.8,1330.7) rotate(-90)" font-size="19.5" fill="#fff" font-family="Liberation Sans">+85</text>
<text x="0" y="0" transform="translate(376.8,1403.4) rotate(-90)" font-size="19.5" fill="#fff" font-family="Liberation Sans">+80</text>
<text x="0" y="0" transform="translate(376.8,1476.0) rotate(-90)" font-size="19.5" fill="#fff" font-family="Liberation Sans">+75</text>
<text x="0" y="0" transform="translate(376.8,1548.7) rotate(-90)" font-size="19.5" fill="#fff" font-family="Liberation Sans">+70</text>
</svg></div>
<div class="a" style="left:967px;top:318px;width:739px;height:1141px;background:#f0f0f0;border-left:1px solid #b8b8b8;border-bottom:1px solid #b0b0b0;box-shadow:-2px 2px 7px rgba(0,0,0,0.45)"></div>
<div class="a" style="left:968px;top:318px;width:738px;height:31px;background:#3b3b3b;"></div>
<svg class="a" style="left:975px;top:325px" width="22" height="20" viewBox="0 0 22 20"><rect x="0" y="6" width="2" height="13" fill="#d0d0d0"/><path d="M3,13 L12,2 L20,8 L11,19Z" fill="#0a8a0a"/><path d="M6 12l5-6M8 14l5-6" stroke="#ff2020" stroke-width="1.3"/><circle cx="12" cy="14" r="2" fill="#ff2020"/><rect x="15" y="3" width="6" height="5" fill="#e0e0e0" stroke="#000" stroke-width="0.6"/></svg>
<div class="a" style="left:997px;top:325.5px;font-size:12.5px;line-height:15.5px;color:#fff;white-space:nowrap;letter-spacing:-0.55px">P-CAD 2002 PCB - [5922H_МСИС_V8.PCB]</div>
<div class="a" style="left:968px;top:349px;width:738px;height:20px;background:#fff;"></div>
<div class="a" style="left:968px;top:369px;width:738px;height:1px;background:#a0a0a0;"></div>
<svg class="a" style="left:976px;top:350px" width="17" height="17" viewBox="0 0 17 17"><path d="M3.5,1.5H11L14.5,5V16.5H3.5Z" fill="#c8c8c8" stroke="#000"/><path d="M0.5,9L5,4.5L9.5,9L5,13.5Z" fill="#0a800a"/></svg>
<div class="a" style="left:998px;top:352px;font-size:12.5px;line-height:15.5px;color:#000;white-space:nowrap;">File</div>
<div class="a" style="left:1030px;top:352px;font-size:12.5px;line-height:15.5px;color:#000;white-space:nowrap;">Edit</div>
<div class="a" style="left:1063px;top:352px;font-size:12.5px;line-height:15.5px;color:#000;white-space:nowrap;">View</div>
<div class="a" style="left:1102px;top:352px;font-size:12.5px;line-height:15.5px;color:#000;white-space:nowrap;">Place</div>
<div class="a" style="left:1144px;top:352px;font-size:12.5px;line-height:15.5px;color:#000;white-space:nowrap;">Route</div>
<div class="a" style="left:1189px;top:352px;font-size:12.5px;line-height:15.5px;color:#000;white-space:nowrap;">Options</div>
<div class="a" style="left:1245px;top:352px;font-size:12.5px;line-height:15.5px;color:#000;white-space:nowrap;">Library</div>
<div class="a" style="left:1295px;top:352px;font-size:12.5px;line-height:15.5px;color:#000;white-space:nowrap;">Utils</div>
<div class="a" style="left:1332px;top:352px;font-size:12.5px;line-height:15.5px;color:#000;white-space:nowrap;">DocTool</div>
<div class="a" style="left:1389px;top:352px;font-size:12.5px;line-height:15.5px;color:#000;white-space:nowrap;">Macro</div>
<div class="a" style="left:1437px;top:352px;font-size:12.5px;line-height:15.5px;color:#000;white-space:nowrap;">Window</div>
<div class="a" style="left:1495px;top:352px;font-size:12.5px;line-height:15.5px;color:#000;white-space:nowrap;">Help</div>
<div class="a" style="left:968px;top:403px;width:504px;height:1px;background:#a0a0a0;"></div>
<div class="a" style="left:1471px;top:370px;width:1px;height:33px;background:#a0a0a0;"></div>
<div class="a" style="left:968px;top:438px;width:315px;height:1px;background:#a0a0a0;"></div>
<div class="a" style="left:1282px;top:404px;width:1px;height:34px;background:#a0a0a0;"></div>
<div class="a" style="left:968px;top:474px;width:738px;height:1px;background:#a0a0a0;"></div>
<div class="a" style="left:1239px;top:439px;width:1px;height:35px;background:#a0a0a0;"></div>
<div class="a" style="left:974px;top:374px;width:27px;height:26px;background:#c4dcf2;border:1px solid #99c8f0"></div>
<div class="a" style="left:1187px;top:407px;width:27px;height:27px;background:#c4dcf2;border:1px solid #99c8f0"></div>
<svg class="a" style="left:977px;top:376px" width="22" height="20" viewBox="0 0 22 20"><path d="M5 2v15l4-4 3 6 2-1-3-6h5z" fill="#fff" stroke="#000" stroke-width="1.1"/></svg>
<svg class="a" style="left:1011px;top:376px" width="22" height="20" viewBox="0 0 22 20"><path d="M5.5 2.5h8l3 3v13h-11z" fill="#fff" stroke="#000" stroke-width="1.2"/></svg>
<svg class="a" style="left:1038px;top:376px" width="22" height="20" viewBox="0 0 22 20"><path d="M2 8h6l1 2h8l-3 8H2z" fill="#f0e060" stroke="#000"/><path d="M3 18l4-7h13l-4 7z" fill="#808000" stroke="#000"/><path d="M12 5q4-4 7 0" fill="none" stroke="#000"/></svg>
<svg class="a" style="left:1066px;top:376px" width="22" height="20" viewBox="0 0 22 20"><rect x="3" y="3" width="15" height="15" fill="#808000" stroke="#000"/><rect x="6" y="3" width="9" height="6" fill="#fff"/><rect x="7" y="12" width="7" height="6" fill="#000"/></svg>
<svg class="a" style="left:1093px;top:376px" width="22" height="20" viewBox="0 0 22 20"><path d="M5 4h11v5H5z" fill="#fff" stroke="#000"/><path d="M2 9h17l1 7H1z" fill="#fff" stroke="#000"/><rect x="3" y="14" width="15" height="3" fill="#000"/><rect x="13" y="11" width="4" height="1.5" fill="#e0c000"/></svg>
<svg class="a" style="left:1127px;top:376px" width="22" height="20" viewBox="0 0 22 20"><path d="M8 2l5 11M14 2L9 13" stroke="#a8a8a8" stroke-width="1.3"/><circle cx="8" cy="16" r="2.5" fill="none" stroke="#a8a8a8" stroke-width="1.3"/><circle cx="14" cy="16" r="2.5" fill="none" stroke="#a8a8a8" stroke-width="1.3"/></svg>
<svg class="a" style="left:1155px;top:376px" width="22" height="20" viewBox="0 0 22 20"><path d="M3 3h7l2 2v9H3z" fill="#eee" stroke="#a8a8a8"/><path d="M9 7h7l2 2v9H9z" fill="#eee" stroke="#a8a8a8"/></svg>
<svg class="a" style="left:1182px;top:376px" width="22" height="20" viewBox="0 0 22 20"><rect x="3" y="5" width="13" height="14" fill="#a8a8a8"/><rect x="7" y="3" width="6" height="4" fill="none" stroke="#a8a8a8"/><rect x="10" y="11" width="9" height="8" fill="#eee" stroke="#a8a8a8"/></svg>
<svg class="a" style="left:1209px;top:376px" width="22" height="20" viewBox="0 0 22 20"><path d="M5 10q4-6 12 0" fill="none" stroke="#a8a8a8" stroke-width="1.5"/><path d="M3 8l2 5 4-2" fill="none" stroke="#a8a8a8" stroke-width="1.5"/></svg>
<svg class="a" style="left:1236px;top:376px" width="22" height="20" viewBox="0 0 22 20"><path d="M4 10q8-6 12 0" fill="none" stroke="#a8a8a8" stroke-width="1.5"/><path d="M18 8l-2 5-4-2" fill="none" stroke="#a8a8a8" stroke-width="1.5"/></svg>
<svg class="a" style="left:1268px;top:376px" width="24" height="20" viewBox="0 0 24 20"><rect x="1" y="5" width="22" height="11" fill="#fff" stroke="#000" stroke-width="1.5"/><path d="M5 5v4M9 5v3M13 5v4M17 5v3" stroke="#000"/></svg>
<svg class="a" style="left:1296px;top:376px" width="22" height="20" viewBox="0 0 22 20"><circle cx="9" cy="8" r="6.5" fill="#fff" stroke="#000" stroke-width="1.4"/><path d="M13 12l6 6" stroke="#000" stroke-width="3"/><path d="M5 8q2-2 4 0t4 0" fill="none" stroke="#000"/></svg>
<svg class="a" style="left:1323px;top:376px" width="22" height="20" viewBox="0 0 22 20"><text x="1" y="8" font-size="8" font-family="Liberation Sans" fill="#000">DRC</text><path d="M5 14l4 4 9-10" fill="none" stroke="#0040ff" stroke-width="2"/></svg>
<svg class="a" style="left:1351px;top:376px" width="22" height="20" viewBox="0 0 22 20"><rect x="3" y="2" width="5" height="8" fill="#fff" stroke="#000"/><path d="M11 5q5-2 5 4" fill="none" stroke="#0040ff" stroke-width="1.5"/><path d="M9 16q-5 2-4-4" fill="none" stroke="#ff0000" stroke-width="1.5"/><path d="M10 12h5l3 3-3 3h-5z" fill="#fff" stroke="#000"/></svg>
<svg class="a" style="left:1386px;top:376px" width="22" height="20" viewBox="0 0 22 20"><rect x="2" y="3" width="7" height="16" fill="#8b0000" stroke="#000" stroke-width="1.5"/><rect x="12" y="3" width="7" height="16" fill="#8b0000" stroke="#000" stroke-width="1.5"/><path d="M5 5v12M15 5v12" stroke="#fff"/></svg>
<svg class="a" style="left:1413px;top:376px" width="22" height="20" viewBox="0 0 22 20"><rect x="2" y="3" width="7" height="16" fill="#8b0000" stroke="#000" stroke-width="1.5"/><rect x="12" y="3" width="7" height="16" fill="#8b0000" stroke="#000" stroke-width="1.5"/><path d="M5 18L16 4" stroke="#0040ff" stroke-width="2.5"/></svg>
<svg class="a" style="left:1440px;top:376px" width="22" height="20" viewBox="0 0 22 20"><path d="M3 3h10v14l-5-4-5 4z" fill="#00e0e8" stroke="#000"/><path d="M16 8v6M18 8v6" stroke="#b00000"/></svg>
<svg class="a" style="left:977px;top:411px" width="22" height="20" viewBox="0 0 22 20"><path d="M3 3v6h8v8" fill="none" stroke="#8b0000" stroke-width="1.5"/><circle cx="3" cy="3" r="1.8" fill="#fff" stroke="#000"/><circle cx="11" cy="17" r="1.8" fill="#fff" stroke="#000"/></svg>
<svg class="a" style="left:1004px;top:411px" width="22" height="20" viewBox="0 0 22 20"><path d="M3 3v6h6l3 3" fill="none" stroke="#8b0000" stroke-width="1.5"/><path d="M9 12h8" stroke="#0040ff"/><path d="M10 9l4 3-4 3" fill="#ffd000" stroke="#000" stroke-width="0.6"/><circle cx="3" cy="3" r="1.5" fill="#fff" stroke="#000"/><circle cx="14" cy="9" r="1.3" fill="#fff" stroke="#000"/><circle cx="14" cy="15" r="1.3" fill="#fff" stroke="#000"/></svg>
<svg class="a" style="left:1030px;top:411px" width="22" height="20" viewBox="0 0 22 20"><path d="M1 18h12l6-10" fill="none" stroke="#e00000" stroke-width="1.5"/><path d="M17 3v15" stroke="#e00000" stroke-width="1.2"/></svg>
<svg class="a" style="left:1064px;top:411px" width="22" height="20" viewBox="0 0 22 20"><rect x="1" y="3" width="5" height="3" fill="#000"/><rect x="1" y="8" width="5" height="3" fill="#000"/><rect x="1" y="13" width="5" height="3" fill="#000"/><path d="M6 4h6q6 0 6 6v9M6 9h4q5 0 5 5v5M6 14h3q3 0 3 3v2" fill="none" stroke="#8b0000" stroke-width="1.3"/></svg>
<svg class="a" style="left:1092px;top:411px" width="22" height="20" viewBox="0 0 22 20"><path d="M3 5h14M3 11h14M3 16h14" stroke="#8b0000" stroke-width="1.2"/><path d="M3 4l14 2" stroke="#0040ff"/><circle cx="3" cy="5" r="1.5" fill="#fff" stroke="#000"/><circle cx="17" cy="5" r="1.5" fill="#fff" stroke="#000"/><circle cx="3" cy="11" r="1.5" fill="#fff" stroke="#000"/><circle cx="17" cy="11" r="1.5" fill="#fff" stroke="#000"/><circle cx="3" cy="16" r="1.5" fill="#fff" stroke="#000"/><circle cx="17" cy="16" r="1.5" fill="#fff" stroke="#000"/></svg>
<svg class="a" style="left:1119px;top:411px" width="22" height="20" viewBox="0 0 22 20"><rect x="1" y="3" width="5" height="3" fill="#000"/><rect x="1" y="9" width="5" height="3" fill="#000"/><rect x="1" y="14" width="5" height="3" fill="#000"/><path d="M6 4h4l4 4h6M6 10h14M6 15h4l4-3h6" fill="none" stroke="#8b0000" stroke-width="1.3"/></svg>
<svg class="a" style="left:1154px;top:411px" width="22" height="20" viewBox="0 0 22 20"><path d="M1 11h8M9 6v10M12 6v10" stroke="#8b0000" stroke-width="1.3"/><path d="M13 8l5 3-5 3z" fill="#ffe000" stroke="#000" stroke-width="0.6"/><circle cx="9" cy="3" r="1.4" fill="#fff" stroke="#000"/><circle cx="12" cy="3" r="1.4" fill="#fff" stroke="#000"/><circle cx="9" cy="18" r="1.4" fill="#fff" stroke="#000"/><circle cx="12" cy="18" r="1.4" fill="#fff" stroke="#000"/></svg>
<svg class="a" style="left:1190px;top:411px" width="22" height="20" viewBox="0 0 22 20"><path d="M10 4v4l3 3v3l-3 3" fill="none" stroke="#8b0000" stroke-width="1.4"/><circle cx="10" cy="3" r="1.6" fill="#fff" stroke="#000"/><circle cx="10" cy="11" r="1.6" fill="#fff" stroke="#000"/><circle cx="10" cy="18" r="1.6" fill="#fff" stroke="#000"/></svg>
<svg class="a" style="left:1217px;top:411px" width="22" height="20" viewBox="0 0 22 20"><path d="M9 4q6 6 0 13" fill="none" stroke="#8b0000" stroke-width="1.4"/><circle cx="9" cy="3" r="1.6" fill="#fff" stroke="#000"/><circle cx="9" cy="11" r="1.6" fill="#fff" stroke="#000"/><circle cx="9" cy="18" r="1.6" fill="#fff" stroke="#000"/></svg>
<svg class="a" style="left:1250px;top:411px" width="22" height="20" viewBox="0 0 22 20"><rect x="7" y="2" width="14" height="17" fill="#008000" stroke="#000"/><rect x="1" y="3" width="5" height="3" fill="#000"/><rect x="1" y="8" width="5" height="3" fill="#000"/><rect x="1" y="13" width="5" height="3" fill="#000"/><path d="M6 4h8v8M6 9h5v6h9" fill="none" stroke="#8b0000" stroke-width="1.2"/><circle cx="17" cy="6" r="1.5" fill="#fff" stroke="#000" stroke-width="0.6"/><circle cx="17" cy="12" r="1.5" fill="#fff" stroke="#000" stroke-width="0.6"/></svg>
<svg class="a" style="left:976px;top:447px" width="22" height="20" viewBox="0 0 22 20"><rect x="1.5" y="2.5" width="18" height="16" fill="#fff" stroke="#000" stroke-width="1.3"/><path d="M1 7h19M1 11h19M1 15h19M7 2v17M13 2v17" stroke="#000"/></svg>
<svg class="a" style="left:1003px;top:447px" width="22" height="20" viewBox="0 0 22 20"><rect x="3" y="2" width="16" height="11" fill="#fff" stroke="#0030e0" stroke-width="1.5"/><path d="M5 6q3-2 6 0t6 0M5 9q3-2 6 0t6 0" fill="none" stroke="#e00000"/><rect x="2" y="13" width="7" height="6" fill="#fff" stroke="#000"/></svg>
<svg class="a" style="left:1030px;top:447px" width="22" height="20" viewBox="0 0 22 20"><rect x="7" y="2" width="14" height="10" fill="#fff" stroke="#0030e0" stroke-width="1.5"/><rect x="2" y="7" width="14" height="11" fill="#fff" stroke="#0030e0" stroke-width="1.5"/><path d="M4 11q3-2 6 0t5 0M4 14q3-2 6 0t5 0" fill="none" stroke="#e00000"/></svg>
<svg class="a" style="left:1058px;top:447px" width="22" height="20" viewBox="0 0 22 20"><rect x="2" y="2" width="16" height="10" rx="1" fill="#fff" stroke="#0030e0" stroke-width="1.5"/><path d="M2 14h16" stroke="#000" stroke-width="1.5"/><path d="M2 17l2 2M4 17l-2 2M6 17l2 2M8 17l-2 2M10 17l2 2M12 17l-2 2M14 17l2 2M16 17l-2 2" stroke="#000" stroke-width="0.7"/></svg>
<svg class="a" style="left:1085px;top:447px" width="22" height="20" viewBox="0 0 22 20"><rect x="1" y="1" width="20" height="19" fill="#00ffff"/><path d="M1 17l9-9 9 10M6 19l5-6 5 6" fill="none" stroke="#000" stroke-width="1.2"/><circle cx="16" cy="5" r="2.5" fill="#ffd000" stroke="#000" stroke-width="0.6"/></svg>
<svg class="a" style="left:1119px;top:447px" width="22" height="20" viewBox="0 0 22 20"><rect x="1.5" y="1.5" width="18" height="18" fill="none" stroke="#e00000" stroke-width="2"/><rect x="5" y="5" width="11" height="11" fill="none" stroke="#e00000" stroke-width="1.3" stroke-dasharray="2 1"/><path d="M11 14h6v3h-6z" fill="#fff" stroke="#e00000"/></svg>
<svg class="a" style="left:1146px;top:447px" width="22" height="20" viewBox="0 0 22 20"><rect x="2" y="2" width="4" height="4" fill="none" stroke="#000"/><rect x="2" y="8" width="4" height="4" fill="none" stroke="#000"/><rect x="2" y="14" width="4" height="4" fill="none" stroke="#000"/><path d="M9 4h10M9 10h10M9 16h10" stroke="#000" stroke-width="1.3"/></svg>
<svg class="a" style="left:1180px;top:447px" width="22" height="20" viewBox="0 0 22 20"><rect x="9" y="4" width="11" height="15" fill="#ddd" stroke="#a8a8a8"/><path d="M9 9h11M9 14h11M13 4v15M16 4v15" stroke="#a8a8a8"/><path d="M2 19q0-12 9-14l-2-3 5 4-5 4 1-3q-6 2-6 12z" fill="#a8a8a8"/></svg>
<svg class="a" style="left:1207px;top:447px" width="22" height="20" viewBox="0 0 22 20"><rect x="10" y="6" width="10" height="13" fill="#ddd" stroke="#a8a8a8"/><rect x="12" y="3" width="8" height="13" fill="#ddd" stroke="#a8a8a8"/><path d="M2 19q0-12 9-14l-2-3 5 4-5 4 1-3q-6 2-6 12z" fill="#a8a8a8"/></svg>
<div class="a" style="left:1001px;top:476px;width:1px;height:940px;background:#c8c8c8;"></div>
<div class="a" style="left:968px;top:946px;width:33px;height:1px;background:#a0a0a0;"></div>
<svg class="a" style="left:973px;top:482px" width="22" height="22" viewBox="0 0 22 22"><rect x="6" y="3" width="10" height="16" fill="#fff" stroke="#000" stroke-width="1.4"/><path d="M3 5h3M3 8h3M3 11h3M3 14h3M3 17h3M16 5h3M16 8h3M16 11h3M16 14h3M16 17h3" stroke="#000" stroke-width="1.4"/></svg>
<svg class="a" style="left:973px;top:509px" width="22" height="22" viewBox="0 0 22 22"><path d="M3 19V4L19 19V4" fill="none" stroke="#0030e0" stroke-width="1.8"/><rect x="1.5" y="2.5" width="3" height="3" fill="#fff" stroke="#e00000"/><rect x="17.5" y="2.5" width="3" height="3" fill="#fff" stroke="#e00000"/><rect x="1.5" y="17.5" width="3" height="3" fill="#fff" stroke="#e00000"/><rect x="17.5" y="17.5" width="3" height="3" fill="#fff" stroke="#e00000"/></svg>
<svg class="a" style="left:973px;top:537px" width="22" height="22" viewBox="0 0 22 22"><circle cx="11" cy="11" r="7" fill="#fff" stroke="#000" stroke-width="1.2"/><path d="M11 7l4 4-4 4-4-4z" fill="#000"/><text x="16" y="21" font-size="7" font-weight="bold" font-family="Liberation Sans">P</text></svg>
<svg class="a" style="left:973px;top:564px" width="22" height="22" viewBox="0 0 22 22"><circle cx="11" cy="11" r="6" fill="#00ffff" stroke="#000" stroke-width="1.2"/><circle cx="11" cy="11" r="2.3" fill="#000"/><text x="16" y="21" font-size="7" font-family="Liberation Sans">V</text></svg>
<svg class="a" style="left:973px;top:591px" width="22" height="22" viewBox="0 0 22 22"><path d="M4 5l14 13" stroke="#000" stroke-width="2"/></svg>
<svg class="a" style="left:973px;top:618px" width="22" height="22" viewBox="0 0 22 22"><path d="M4 6q10 0 13 11" fill="none" stroke="#000" stroke-width="2"/></svg>
<svg class="a" style="left:973px;top:645px" width="22" height="22" viewBox="0 0 22 22"><path d="M3 14L7 6l4 5 7-7v16l-6-3z" fill="#fff" stroke="#000" stroke-width="1.2"/></svg>
<svg class="a" style="left:973px;top:672px" width="22" height="22" viewBox="0 0 22 22"><rect x="4" y="4" width="14" height="14" fill="#fff" stroke="#000" stroke-width="1.4"/><path d="M4 4l14 14M18 4L4 18" stroke="#000"/></svg>
<svg class="a" style="left:973px;top:699px" width="22" height="22" viewBox="0 0 22 22"><path d="M7 12l6-7 6 5-6 7z" fill="#fff" stroke="#000" stroke-width="1.3"/><path d="M3 16h8v4H3z" fill="#e000e0"/><path d="M4 13q-2 3 0 5" fill="none" stroke="#000"/></svg>
<svg class="a" style="left:973px;top:726px" width="22" height="22" viewBox="0 0 22 22"><path d="M2 10l5-5h13l-5 5z" fill="#fff" stroke="#000" stroke-width="1.2"/><path d="M6 10v5l3 3 3-3v-5" fill="none" stroke="#000" stroke-dasharray="1 1"/></svg>
<svg class="a" style="left:973px;top:753px" width="22" height="22" viewBox="0 0 22 22"><circle cx="11" cy="11" r="7" fill="none" stroke="#000" stroke-width="2.3"/><path d="M6 6l10 10" stroke="#000" stroke-width="2.3"/></svg>
<svg class="a" style="left:973px;top:780px" width="22" height="22" viewBox="0 0 22 22"><path d="M3 3h4v12h6v4H3z" fill="#000"/><path d="M9 3h9v12h-4v4" fill="#c0c0c0"/><circle cx="14" cy="7" r="1.5" fill="#fff"/></svg>
<svg class="a" style="left:973px;top:807px" width="22" height="22" viewBox="0 0 22 22"><rect x="3" y="3" width="16" height="16" fill="#00ffff" stroke="#000" stroke-width="1.5"/><path d="M6 6l10 4-4 1 3 5-2 1-3-5-3 3z" fill="#fff" stroke="#000" stroke-width="0.8"/></svg>
<svg class="a" style="left:973px;top:834px" width="22" height="22" viewBox="0 0 22 22"><text x="11" y="18" font-size="19" text-anchor="middle" font-family="Liberation Serif" fill="#000">A</text></svg>
<svg class="a" style="left:973px;top:861px" width="22" height="22" viewBox="0 0 22 22"><path d="M5 7h14v9H8l-3-3z" fill="#fff" stroke="#000" stroke-width="1.3"/><path d="M10 10h7M10 13h7" stroke="#000"/><circle cx="5" cy="6" r="2.5" fill="none" stroke="#000" stroke-width="1.3"/></svg>
<svg class="a" style="left:973px;top:888px" width="22" height="22" viewBox="0 0 22 22"><text x="11" y="16" font-size="13" text-anchor="middle" font-family="Liberation Serif" fill="#000">{F}</text></svg>
<svg class="a" style="left:973px;top:915px" width="22" height="22" viewBox="0 0 22 22"><path d="M3 3v16M19 3v16" stroke="#000" stroke-width="2.2"/><path d="M4 11h14M5 11l3-2v4zM17 11l-3-2v4z" stroke="#000" stroke-width="1.2"/></svg>
<div class="a" style="left:1006px;top:477px;width:175px;height:13px;background:linear-gradient(90deg,#c9d9ea,#d6e3f0);"></div>
<div class="a" style="left:1008px;top:475.5px;font-size:11.5px;line-height:14.5px;color:#000;white-space:nowrap;">Design Manager</div>
<div class="a" style="left:1184px;top:474px;font-size:14px;line-height:17px;color:#000;white-space:nowrap;font-weight:bold">×</div>
<div class="a" style="left:1006px;top:491px;width:188px;height:1px;background:#a0a0a0;"></div>
<div class="a" style="left:1012px;top:496px;width:27px;height:26px;background:#c4dcf2;border:1px solid #99c8f0"></div>
<svg class="a" style="left:1016px;top:500px" width="20" height="20" viewBox="0 0 20 20"><path d="M5 15q0-9 10-9" fill="none" stroke="#8000a0" stroke-width="1.6"/><rect x="3" y="13" width="3" height="3" fill="#0030e0"/><rect x="7" y="13" width="3" height="3" fill="#0030e0"/><rect x="14" y="3" width="3" height="3" fill="#fff" stroke="#0030e0"/><rect x="14" y="8" width="3" height="3" fill="#fff" stroke="#0030e0"/></svg>
<svg class="a" style="left:1043px;top:500px" width="20" height="20" viewBox="0 0 20 20"><rect x="5" y="4" width="10" height="13" fill="#fff" stroke="#000" stroke-width="1.3"/><path d="M3 6h2M3 9h2M3 12h2M3 15h2M15 6h2M15 9h2M15 12h2M15 15h2" stroke="#000"/></svg>
<svg class="a" style="left:1077px;top:500px" width="20" height="20" viewBox="0 0 20 20"><circle cx="8" cy="9" r="5.5" fill="#00e8f0" stroke="#000" stroke-width="1.3"/><path d="M5 9h6M8 6v6" stroke="#000" stroke-width="1.3"/><path d="M12 13l5 5" stroke="#000" stroke-width="2.2"/></svg>
<svg class="a" style="left:1104px;top:500px" width="20" height="20" viewBox="0 0 20 20"><path d="M3 5h13l-5 6v6l-3 1v-7z" fill="#fff" stroke="#000" stroke-width="1.1"/><path d="M8 10l2 0v7l-2 1z" fill="#40c040"/></svg>
<svg class="a" style="left:1130px;top:500px" width="20" height="22" viewBox="0 0 20 22"><rect x="2" y="2" width="11" height="6" fill="#ffe800" stroke="#808080" stroke-width="0.6"/><path d="M6 4v13l3-3 3 6 2-1-3-6h4z" fill="#fff" stroke="#000" stroke-width="1.1"/></svg>
<div class="a" style="left:1158px;top:503px;font-size:11.5px;line-height:14.5px;color:#000;white-space:nowrap;">Filter Dir</div>
<div class="a" style="left:1006px;top:531px;width:189px;height:102px;background:#f0f0f0;border:1px solid #a0a0a0;border-top:2px solid #909090"></div><div class="a" style="left:1008px;top:533px;font-size:11.5px;line-height:14.5px;color:#000;white-space:nowrap;">Net</div><div class="a" style="left:1071px;top:534px;width:60px;height:17px;background:#e1e1e1;border:1px solid #adadad"></div><div class="a" style="left:1071px;top:536px;font-size:11.5px;line-height:14.5px;color:#000;white-space:nowrap;">Customize</div><div class="a" style="left:1134px;top:534px;width:59px;height:17px;background:#e1e1e1;border:1px solid #adadad"></div><div class="a" style="left:1138px;top:536px;font-size:11.5px;line-height:14.5px;color:#000;white-space:nowrap;">Select All</div>
<div class="a" style="left:1008px;top:553px;width:186px;height:79px;background:#fff;border-top:1px solid #808080;border-left:1px solid #808080;border-bottom:1px solid #fff;border-right:1px solid #fff;box-shadow:inset 1px 1px 0 #404040"></div>
<div class="a" style="left:1010px;top:554px;width:58px;height:21px;background:#fff;border-right:1px solid #f0f0f0"></div>
<div class="a" style="left:1015px;top:558px;font-size:11.5px;line-height:14.5px;color:#000;white-space:nowrap;">Net Cla...</div>
<div class="a" style="left:1013px;top:578px;width:56px;height:19px;background:#f0f0f0;"></div>
<div class="a" style="left:1015px;top:580px;font-size:11.5px;line-height:14.5px;color:#000;white-space:nowrap;">All Nets</div>
<div class="a" style="left:1015px;top:599px;font-size:11.5px;line-height:14.5px;color:#000;white-space:nowrap;">POWER</div>
<div class="a" style="left:1006px;top:638px;width:189px;height:228px;background:#f0f0f0;border:1px solid #a0a0a0;border-top:2px solid #909090"></div><div class="a" style="left:1008px;top:640px;font-size:11.5px;line-height:14.5px;color:#000;white-space:nowrap;">Nets</div><div class="a" style="left:1071px;top:641px;width:60px;height:17px;background:#e1e1e1;border:1px solid #adadad"></div><div class="a" style="left:1071px;top:643px;font-size:11.5px;line-height:14.5px;color:#000;white-space:nowrap;">Customize</div><div class="a" style="left:1134px;top:641px;width:59px;height:17px;background:#e1e1e1;border:1px solid #adadad"></div><div class="a" style="left:1138px;top:643px;font-size:11.5px;line-height:14.5px;color:#000;white-space:nowrap;">Select All</div>
<div class="a" style="left:1008px;top:660px;width:186px;height:190px;background:#fff;border-top:1px solid #808080;border-left:1px solid #808080;border-bottom:1px solid #fff;border-right:1px solid #fff;box-shadow:inset 1px 1px 0 #404040"></div>
<div class="a" style="left:1015px;top:665px;font-size:11.5px;line-height:14.5px;color:#000;white-space:nowrap;">Name</div>
<div class="a" style="left:1075px;top:665px;font-size:11.5px;line-height:14.5px;color:#000;white-space:nowrap;">Node ...</div>
<div class="a" style="left:1135px;top:665px;font-size:11.5px;line-height:14.5px;color:#000;white-space:nowrap;">Conne..</div>
<div class="a" style="left:1069px;top:662px;width:1px;height:22px;background:#e6e6e6;"></div>
<div class="a" style="left:1129px;top:662px;width:1px;height:22px;background:#e6e6e6;"></div>
<div class="a" style="left:1009px;top:684px;width:167px;height:165px;overflow:hidden">
<div class="a" style="left:6px;top:3px;font-size:11.5px;line-height:14.5px;color:#000;white-space:nowrap;">+2,5VA</div>
<div class="a" style="left:66px;top:3px;font-size:11.5px;line-height:14.5px;color:#000;white-space:nowrap;">7</div>
<div class="a" style="left:126px;top:3px;font-size:11.5px;line-height:14.5px;color:#000;white-space:nowrap;">Visible</div>
<div class="a" style="left:6px;top:22px;font-size:11.5px;line-height:14.5px;color:#000;white-space:nowrap;">+5VA</div>
<div class="a" style="left:66px;top:22px;font-size:11.5px;line-height:14.5px;color:#000;white-space:nowrap;">12</div>
<div class="a" style="left:126px;top:22px;font-size:11.5px;line-height:14.5px;color:#000;white-space:nowrap;">Visible</div>
<div class="a" style="left:6px;top:41px;font-size:11.5px;line-height:14.5px;color:#000;white-space:nowrap;">+5VD</div>
<div class="a" style="left:66px;top:41px;font-size:11.5px;line-height:14.5px;color:#000;white-space:nowrap;">5</div>
<div class="a" style="left:126px;top:41px;font-size:11.5px;line-height:14.5px;color:#000;white-space:nowrap;">Visible</div>
<div class="a" style="left:6px;top:60px;font-size:11.5px;line-height:14.5px;color:#000;white-space:nowrap;">+5VI</div>
<div class="a" style="left:66px;top:60px;font-size:11.5px;line-height:14.5px;color:#000;white-space:nowrap;">7</div>
<div class="a" style="left:126px;top:60px;font-size:11.5px;line-height:14.5px;color:#000;white-space:nowrap;">Visible</div>
<div class="a" style="left:6px;top:79px;font-size:11.5px;line-height:14.5px;color:#000;white-space:nowrap;">+5VRS</div>
<div class="a" style="left:66px;top:79px;font-size:11.5px;line-height:14.5px;color:#000;white-space:nowrap;">19</div>
<div class="a" style="left:126px;top:79px;font-size:11.5px;line-height:14.5px;color:#000;white-space:nowrap;">Visible</div>
<div class="a" style="left:6px;top:98px;font-size:11.5px;line-height:14.5px;color:#000;white-space:nowrap;">+5V_PIC</div>
<div class="a" style="left:66px;top:98px;font-size:11.5px;line-height:14.5px;color:#000;white-space:nowrap;">6</div>
<div class="a" style="left:126px;top:98px;font-size:11.5px;line-height:14.5px;color:#000;white-space:nowrap;">Visible</div>
<div class="a" style="left:6px;top:117px;font-size:11.5px;line-height:14.5px;color:#000;white-space:nowrap;">+7V</div>
<div class="a" style="left:66px;top:117px;font-size:11.5px;line-height:14.5px;color:#000;white-space:nowrap;">5</div>
<div class="a" style="left:126px;top:117px;font-size:11.5px;line-height:14.5px;color:#000;white-space:nowrap;">Visible</div>
<div class="a" style="left:6px;top:136px;font-size:11.5px;line-height:14.5px;color:#000;white-space:nowrap;">+24V</div>
<div class="a" style="left:66px;top:136px;font-size:11.5px;line-height:14.5px;color:#000;white-space:nowrap;">8</div>
<div class="a" style="left:126px;top:136px;font-size:11.5px;line-height:14.5px;color:#000;white-space:nowrap;">Visible</div>
<div class="a" style="left:6px;top:155px;font-size:11.5px;line-height:14.5px;color:#000;white-space:nowrap;">+24VI</div>
<div class="a" style="left:66px;top:155px;font-size:11.5px;line-height:14.5px;color:#000;white-space:nowrap;">10</div>
<div class="a" style="left:126px;top:155px;font-size:11.5px;line-height:14.5px;color:#000;white-space:nowrap;">Visible</div>
</div>
<div class="a" style="left:1177px;top:661px;width:16px;height:188px;background:#f0f0f0;"></div>
<svg class="a" style="left:1180px;top:666px" width="10" height="7" viewBox="0 0 10 7"><path d="M1 6l4-4 4 4" fill="none" stroke="#606060" stroke-width="1.3"/></svg>
<div class="a" style="left:1178px;top:679px;width:14px;height:17px;background:#cdcdcd;"></div>
<svg class="a" style="left:1180px;top:834px" width="10" height="7" viewBox="0 0 10 7"><path d="M1 1l4 4 4-4" fill="none" stroke="#606060" stroke-width="1.3"/></svg>
<div class="a" style="left:1009px;top:849px;width:168px;height:15px;background:#f0f0f0;"></div>
<div class="a" style="left:1026px;top:850px;width:125px;height:13px;background:#cdcdcd;"></div>
<svg class="a" style="left:1013px;top:852px" width="7" height="10" viewBox="0 0 7 10"><path d="M6 1L2 5l4 4" fill="none" stroke="#606060" stroke-width="1.3"/></svg>
<svg class="a" style="left:1164px;top:852px" width="7" height="10" viewBox="0 0 7 10"><path d="M1 1l4 4-4 4" fill="none" stroke="#606060" stroke-width="1.3"/></svg>
<div class="a" style="left:1006px;top:871px;width:189px;height:544px;background:#f0f0f0;border:1px solid #a0a0a0;border-top:2px solid #909090"></div><div class="a" style="left:1008px;top:873px;font-size:11.5px;line-height:14.5px;color:#000;white-space:nowrap;">Nodes on</div><div class="a" style="left:1071px;top:874px;width:60px;height:17px;background:#e1e1e1;border:1px solid #adadad"></div><div class="a" style="left:1071px;top:876px;font-size:11.5px;line-height:14.5px;color:#000;white-space:nowrap;">Customize</div><div class="a" style="left:1134px;top:874px;width:59px;height:17px;background:#e1e1e1;border:1px solid #adadad"></div><div class="a" style="left:1138px;top:876px;font-size:11.5px;line-height:14.5px;color:#000;white-space:nowrap;">Select All</div>
<div class="a" style="left:1008px;top:894px;width:186px;height:516px;background:#fff;border-top:1px solid #808080;border-left:1px solid #808080;border-bottom:1px solid #fff;border-right:1px solid #fff;box-shadow:inset 1px 1px 0 #404040"></div>
<div class="a" style="left:1015px;top:899px;font-size:11.5px;line-height:14.5px;color:#000;white-space:nowrap;">Name</div>
<div class="a" style="left:1075px;top:899px;font-size:11.5px;line-height:14.5px;color:#000;white-space:nowrap;">Pad Style</div>
<div class="a" style="left:1135px;top:899px;font-size:11.5px;line-height:14.5px;color:#000;white-space:nowrap;">Electric...</div>
<div class="a" style="left:1069px;top:896px;width:1px;height:22px;background:#e6e6e6;"></div>
<div class="a" style="left:1129px;top:896px;width:1px;height:22px;background:#e6e6e6;"></div>
<div class="a" style="left:1188px;top:896px;width:1px;height:22px;background:#e6e6e6;"></div>
<div class="a" style="left:1201px;top:476px;width:505px;height:922px;overflow:hidden;background:#000">
<svg class="a" style="left:-1201px;top:-476px" width="1706" height="1534" viewBox="0 0 1706 1534">
<path d="M1208.9,478.9h1.3v1.3h-1.3zM1208.9,517.4h1.3v1.3h-1.3zM1208.9,555.8h1.3v1.3h-1.3zM1208.9,594.3h1.3v1.3h-1.3zM1208.9,632.7h1.3v1.3h-1.3zM1208.9,671.2h1.3v1.3h-1.3zM1208.9,709.6h1.3v1.3h-1.3zM1208.9,748.1h1.3v1.3h-1.3zM1208.9,786.5h1.3v1.3h-1.3zM1208.9,825.0h1.3v1.3h-1.3zM1208.9,863.4h1.3v1.3h-1.3zM1208.9,901.9h1.3v1.3h-1.3zM1208.9,940.3h1.3v1.3h-1.3zM1208.9,978.8h1.3v1.3h-1.3zM1208.9,1017.2h1.3v1.3h-1.3zM1208.9,1055.7h1.3v1.3h-1.3zM1208.9,1094.1h1.3v1.3h-1.3zM1208.9,1132.6h1.3v1.3h-1.3zM1208.9,1171.0h1.3v1.3h-1.3zM1208.9,1209.5h1.3v1.3h-1.3zM1208.9,1247.9h1.3v1.3h-1.3zM1208.9,1286.4h1.3v1.3h-1.3zM1208.9,1324.8h1.3v1.3h-1.3zM1208.9,1363.3h1.3v1.3h-1.3zM1247.4,478.9h1.3v1.3h-1.3zM1247.4,517.4h1.3v1.3h-1.3zM1247.4,555.8h1.3v1.3h-1.3zM1247.4,594.3h1.3v1.3h-1.3zM1247.4,632.7h1.3v1.3h-1.3zM1247.4,671.2h1.3v1.3h-1.3zM1247.4,709.6h1.3v1.3h-1.3zM1247.4,748.1h1.3v1.3h-1.3zM1247.4,786.5h1.3v1.3h-1.3zM1247.4,825.0h1.3v1.3h-1.3zM1247.4,863.4h1.3v1.3h-1.3zM1247.4,901.9h1.3v1.3h-1.3zM1247.4,940.3h1.3v1.3h-1.3zM1247.4,978.8h1.3v1.3h-1.3zM1247.4,1017.2h1.3v1.3h-1.3zM1247.4,1055.7h1.3v1.3h-1.3zM1247.4,1094.1h1.3v1.3h-1.3zM1247.4,1132.6h1.3v1.3h-1.3zM1247.4,1171.0h1.3v1.3h-1.3zM1247.4,1209.5h1.3v1.3h-1.3zM1247.4,1247.9h1.3v1.3h-1.3zM1247.4,1286.4h1.3v1.3h-1.3zM1247.4,1324.8h1.3v1.3h-1.3zM1247.4,1363.3h1.3v1.3h-1.3zM1285.8,478.9h1.3v1.3h-1.3zM1285.8,517.4h1.3v1.3h-1.3zM1285.8,555.8h1.3v1.3h-1.3zM1285.8,594.3h1.3v1.3h-1.3zM1285.8,632.7h1.3v1.3h-1.3zM1285.8,671.2h1.3v1.3h-1.3zM1285.8,709.6h1.3v1.3h-1.3zM1285.8,748.1h1.3v1.3h-1.3zM1285.8,786.5h1.3v1.3h-1.3zM1285.8,825.0h1.3v1.3h-1.3zM1285.8,863.4h1.3v1.3h-1.3zM1285.8,901.9h1.3v1.3h-1.3zM1285.8,940.3h1.3v1.3h-1.3zM1285.8,978.8h1.3v1.3h-1.3zM1285.8,1017.2h1.3v1.3h-1.3zM1285.8,1055.7h1.3v1.3h-1.3zM1285.8,1094.1h1.3v1.3h-1.3zM1285.8,1132.6h1.3v1.3h-1.3zM1285.8,1171.0h1.3v1.3h-1.3zM1285.8,1209.5h1.3v1.3h-1.3zM1285.8,1247.9h1.3v1.3h-1.3zM1285.8,1286.4h1.3v1.3h-1.3zM1285.8,1324.8h1.3v1.3h-1.3zM1285.8,1363.3h1.3v1.3h-1.3zM1324.3,478.9h1.3v1.3h-1.3zM1324.3,517.4h1.3v1.3h-1.3zM1324.3,555.8h1.3v1.3h-1.3zM1324.3,594.3h1.3v1.3h-1.3zM1324.3,632.7h1.3v1.3h-1.3zM1324.3,671.2h1.3v1.3h-1.3zM1324.3,709.6h1.3v1.3h-1.3zM1324.3,748.1h1.3v1.3h-1.3zM1324.3,786.5h1.3v1.3h-1.3zM1324.3,825.0h1.3v1.3h-1.3zM1324.3,863.4h1.3v1.3h-1.3zM1324.3,901.9h1.3v1.3h-1.3zM1324.3,940.3h1.3v1.3h-1.3zM1324.3,978.8h1.3v1.3h-1.3zM1324.3,1017.2h1.3v1.3h-1.3zM1324.3,1055.7h1.3v1.3h-1.3zM1324.3,1094.1h1.3v1.3h-1.3zM1324.3,1132.6h1.3v1.3h-1.3zM1324.3,1171.0h1.3v1.3h-1.3zM1324.3,1209.5h1.3v1.3h-1.3zM1324.3,1247.9h1.3v1.3h-1.3zM1324.3,1286.4h1.3v1.3h-1.3zM1324.3,1324.8h1.3v1.3h-1.3zM1324.3,1363.3h1.3v1.3h-1.3zM1362.7,478.9h1.3v1.3h-1.3zM1362.7,517.4h1.3v1.3h-1.3zM1362.7,555.8h1.3v1.3h-1.3zM1362.7,594.3h1.3v1.3h-1.3zM1362.7,632.7h1.3v1.3h-1.3zM1362.7,671.2h1.3v1.3h-1.3zM1362.7,709.6h1.3v1.3h-1.3zM1362.7,748.1h1.3v1.3h-1.3zM1362.7,786.5h1.3v1.3h-1.3zM1362.7,825.0h1.3v1.3h-1.3zM1362.7,863.4h1.3v1.3h-1.3zM1362.7,901.9h1.3v1.3h-1.3zM1362.7,940.3h1.3v1.3h-1.3zM1362.7,978.8h1.3v1.3h-1.3zM1362.7,1017.2h1.3v1.3h-1.3zM1362.7,1055.7h1.3v1.3h-1.3zM1362.7,1094.1h1.3v1.3h-1.3zM1362.7,1132.6h1.3v1.3h-1.3zM1362.7,1171.0h1.3v1.3h-1.3zM1362.7,1209.5h1.3v1.3h-1.3zM1362.7,1247.9h1.3v1.3h-1.3zM1362.7,1286.4h1.3v1.3h-1.3zM1362.7,1324.8h1.3v1.3h-1.3zM1362.7,1363.3h1.3v1.3h-1.3zM1401.2,478.9h1.3v1.3h-1.3zM1401.2,517.4h1.3v1.3h-1.3zM1401.2,555.8h1.3v1.3h-1.3zM1401.2,594.3h1.3v1.3h-1.3zM1401.2,632.7h1.3v1.3h-1.3zM1401.2,671.2h1.3v1.3h-1.3zM1401.2,709.6h1.3v1.3h-1.3zM1401.2,748.1h1.3v1.3h-1.3zM1401.2,786.5h1.3v1.3h-1.3zM1401.2,825.0h1.3v1.3h-1.3zM1401.2,863.4h1.3v1.3h-1.3zM1401.2,901.9h1.3v1.3h-1.3zM1401.2,940.3h1.3v1.3h-1.3zM1401.2,978.8h1.3v1.3h-1.3zM1401.2,1017.2h1.3v1.3h-1.3zM1401.2,1055.7h1.3v1.3h-1.3zM1401.2,1094.1h1.3v1.3h-1.3zM1401.2,1132.6h1.3v1.3h-1.3zM1401.2,1171.0h1.3v1.3h-1.3zM1401.2,1209.5h1.3v1.3h-1.3zM1401.2,1247.9h1.3v1.3h-1.3zM1401.2,1286.4h1.3v1.3h-1.3zM1401.2,1324.8h1.3v1.3h-1.3zM1401.2,1363.3h1.3v1.3h-1.3zM1439.6,478.9h1.3v1.3h-1.3zM1439.6,517.4h1.3v1.3h-1.3zM1439.6,555.8h1.3v1.3h-1.3zM1439.6,594.3h1.3v1.3h-1.3zM1439.6,632.7h1.3v1.3h-1.3zM1439.6,671.2h1.3v1.3h-1.3zM1439.6,709.6h1.3v1.3h-1.3zM1439.6,748.1h1.3v1.3h-1.3zM1439.6,786.5h1.3v1.3h-1.3zM1439.6,825.0h1.3v1.3h-1.3zM1439.6,863.4h1.3v1.3h-1.3zM1439.6,901.9h1.3v1.3h-1.3zM1439.6,940.3h1.3v1.3h-1.3zM1439.6,978.8h1.3v1.3h-1.3zM1439.6,1017.2h1.3v1.3h-1.3zM1439.6,1055.7h1.3v1.3h-1.3zM1439.6,1094.1h1.3v1.3h-1.3zM1439.6,1132.6h1.3v1.3h-1.3zM1439.6,1171.0h1.3v1.3h-1.3zM1439.6,1209.5h1.3v1.3h-1.3zM1439.6,1247.9h1.3v1.3h-1.3zM1439.6,1286.4h1.3v1.3h-1.3zM1439.6,1324.8h1.3v1.3h-1.3zM1439.6,1363.3h1.3v1.3h-1.3zM1478.1,478.9h1.3v1.3h-1.3zM1478.1,517.4h1.3v1.3h-1.3zM1478.1,555.8h1.3v1.3h-1.3zM1478.1,594.3h1.3v1.3h-1.3zM1478.1,632.7h1.3v1.3h-1.3zM1478.1,671.2h1.3v1.3h-1.3zM1478.1,709.6h1.3v1.3h-1.3zM1478.1,748.1h1.3v1.3h-1.3zM1478.1,786.5h1.3v1.3h-1.3zM1478.1,825.0h1.3v1.3h-1.3zM1478.1,863.4h1.3v1.3h-1.3zM1478.1,901.9h1.3v1.3h-1.3zM1478.1,940.3h1.3v1.3h-1.3zM1478.1,978.8h1.3v1.3h-1.3zM1478.1,1017.2h1.3v1.3h-1.3zM1478.1,1055.7h1.3v1.3h-1.3zM1478.1,1094.1h1.3v1.3h-1.3zM1478.1,1132.6h1.3v1.3h-1.3zM1478.1,1171.0h1.3v1.3h-1.3zM1478.1,1209.5h1.3v1.3h-1.3zM1478.1,1247.9h1.3v1.3h-1.3zM1478.1,1286.4h1.3v1.3h-1.3zM1478.1,1324.8h1.3v1.3h-1.3zM1478.1,1363.3h1.3v1.3h-1.3zM1516.5,478.9h1.3v1.3h-1.3zM1516.5,517.4h1.3v1.3h-1.3zM1516.5,555.8h1.3v1.3h-1.3zM1516.5,594.3h1.3v1.3h-1.3zM1516.5,632.7h1.3v1.3h-1.3zM1516.5,671.2h1.3v1.3h-1.3zM1516.5,709.6h1.3v1.3h-1.3zM1516.5,748.1h1.3v1.3h-1.3zM1516.5,786.5h1.3v1.3h-1.3zM1516.5,825.0h1.3v1.3h-1.3zM1516.5,863.4h1.3v1.3h-1.3zM1516.5,901.9h1.3v1.3h-1.3zM1516.5,940.3h1.3v1.3h-1.3zM1516.5,978.8h1.3v1.3h-1.3zM1516.5,1017.2h1.3v1.3h-1.3zM1516.5,1055.7h1.3v1.3h-1.3zM1516.5,1094.1h1.3v1.3h-1.3zM1516.5,1132.6h1.3v1.3h-1.3zM1516.5,1171.0h1.3v1.3h-1.3zM1516.5,1209.5h1.3v1.3h-1.3zM1516.5,1247.9h1.3v1.3h-1.3zM1516.5,1286.4h1.3v1.3h-1.3zM1516.5,1324.8h1.3v1.3h-1.3zM1516.5,1363.3h1.3v1.3h-1.3zM1555.0,478.9h1.3v1.3h-1.3zM1555.0,517.4h1.3v1.3h-1.3zM1555.0,555.8h1.3v1.3h-1.3zM1555.0,594.3h1.3v1.3h-1.3zM1555.0,632.7h1.3v1.3h-1.3zM1555.0,671.2h1.3v1.3h-1.3zM1555.0,709.6h1.3v1.3h-1.3zM1555.0,748.1h1.3v1.3h-1.3zM1555.0,786.5h1.3v1.3h-1.3zM1555.0,825.0h1.3v1.3h-1.3zM1555.0,863.4h1.3v1.3h-1.3zM1555.0,901.9h1.3v1.3h-1.3zM1555.0,940.3h1.3v1.3h-1.3zM1555.0,978.8h1.3v1.3h-1.3zM1555.0,1017.2h1.3v1.3h-1.3zM1555.0,1055.7h1.3v1.3h-1.3zM1555.0,1094.1h1.3v1.3h-1.3zM1555.0,1132.6h1.3v1.3h-1.3zM1555.0,1171.0h1.3v1.3h-1.3zM1555.0,1209.5h1.3v1.3h-1.3zM1555.0,1247.9h1.3v1.3h-1.3zM1555.0,1286.4h1.3v1.3h-1.3zM1555.0,1324.8h1.3v1.3h-1.3zM1555.0,1363.3h1.3v1.3h-1.3zM1593.4,478.9h1.3v1.3h-1.3zM1593.4,517.4h1.3v1.3h-1.3zM1593.4,555.8h1.3v1.3h-1.3zM1593.4,594.3h1.3v1.3h-1.3zM1593.4,632.7h1.3v1.3h-1.3zM1593.4,671.2h1.3v1.3h-1.3zM1593.4,709.6h1.3v1.3h-1.3zM1593.4,748.1h1.3v1.3h-1.3zM1593.4,786.5h1.3v1.3h-1.3zM1593.4,825.0h1.3v1.3h-1.3zM1593.4,863.4h1.3v1.3h-1.3zM1593.4,901.9h1.3v1.3h-1.3zM1593.4,940.3h1.3v1.3h-1.3zM1593.4,978.8h1.3v1.3h-1.3zM1593.4,1017.2h1.3v1.3h-1.3zM1593.4,1055.7h1.3v1.3h-1.3zM1593.4,1094.1h1.3v1.3h-1.3zM1593.4,1132.6h1.3v1.3h-1.3zM1593.4,1171.0h1.3v1.3h-1.3zM1593.4,1209.5h1.3v1.3h-1.3zM1593.4,1247.9h1.3v1.3h-1.3zM1593.4,1286.4h1.3v1.3h-1.3zM1593.4,1324.8h1.3v1.3h-1.3zM1593.4,1363.3h1.3v1.3h-1.3zM1631.9,478.9h1.3v1.3h-1.3zM1631.9,517.4h1.3v1.3h-1.3zM1631.9,555.8h1.3v1.3h-1.3zM1631.9,594.3h1.3v1.3h-1.3zM1631.9,632.7h1.3v1.3h-1.3zM1631.9,671.2h1.3v1.3h-1.3zM1631.9,709.6h1.3v1.3h-1.3zM1631.9,748.1h1.3v1.3h-1.3zM1631.9,786.5h1.3v1.3h-1.3zM1631.9,825.0h1.3v1.3h-1.3zM1631.9,863.4h1.3v1.3h-1.3zM1631.9,901.9h1.3v1.3h-1.3zM1631.9,940.3h1.3v1.3h-1.3zM1631.9,978.8h1.3v1.3h-1.3zM1631.9,1017.2h1.3v1.3h-1.3zM1631.9,1055.7h1.3v1.3h-1.3zM1631.9,1094.1h1.3v1.3h-1.3zM1631.9,1132.6h1.3v1.3h-1.3zM1631.9,1171.0h1.3v1.3h-1.3zM1631.9,1209.5h1.3v1.3h-1.3zM1631.9,1247.9h1.3v1.3h-1.3zM1631.9,1286.4h1.3v1.3h-1.3zM1631.9,1324.8h1.3v1.3h-1.3zM1631.9,1363.3h1.3v1.3h-1.3zM1670.3,478.9h1.3v1.3h-1.3zM1670.3,517.4h1.3v1.3h-1.3zM1670.3,555.8h1.3v1.3h-1.3zM1670.3,594.3h1.3v1.3h-1.3zM1670.3,632.7h1.3v1.3h-1.3zM1670.3,671.2h1.3v1.3h-1.3zM1670.3,709.6h1.3v1.3h-1.3zM1670.3,748.1h1.3v1.3h-1.3zM1670.3,786.5h1.3v1.3h-1.3zM1670.3,825.0h1.3v1.3h-1.3zM1670.3,863.4h1.3v1.3h-1.3zM1670.3,901.9h1.3v1.3h-1.3zM1670.3,940.3h1.3v1.3h-1.3zM1670.3,978.8h1.3v1.3h-1.3zM1670.3,1017.2h1.3v1.3h-1.3zM1670.3,1055.7h1.3v1.3h-1.3zM1670.3,1094.1h1.3v1.3h-1.3zM1670.3,1132.6h1.3v1.3h-1.3zM1670.3,1171.0h1.3v1.3h-1.3zM1670.3,1209.5h1.3v1.3h-1.3zM1670.3,1247.9h1.3v1.3h-1.3zM1670.3,1286.4h1.3v1.3h-1.3zM1670.3,1324.8h1.3v1.3h-1.3zM1670.3,1363.3h1.3v1.3h-1.3z" fill="#00d000"/>
<polyline points="1485.5,470.0 1485.5,800.0 1590.0,905.0 1706.0,905.0" fill="none" stroke="#00ff00" stroke-width="25" stroke-linejoin="round" stroke-linecap="round" stroke-linejoin="miter" stroke-linecap="butt"/>
<polyline points="1524.0,470.0 1524.0,662.0 1611.0,750.0 1706.0,750.0" fill="none" stroke="#00ff00" stroke-width="18.5" stroke-linejoin="round" stroke-linecap="round" stroke-linejoin="miter" stroke-linecap="butt"/>
<polygon points="1550.0,476.0 1706.0,476.0 1706.0,583.0 1676.0,583.0 1633.0,626.0 1633.0,661.0 1562.0,661.0 1550.0,649.0" fill="#00ff00" />
<polygon points="1633.0,607.0 1706.0,607.0 1706.0,700.0 1633.0,700.0" fill="#000" />
<polyline points="1484.7,552.3 1700.0,552.3" fill="none" stroke="#ff0000" stroke-width="22.6" stroke-linejoin="round" stroke-linecap="round" stroke-linecap="butt"/>
<polyline points="1484.7,552.0 1484.7,602.0" fill="none" stroke="#ff0000" stroke-width="18" stroke-linejoin="round" stroke-linecap="round" />
<polyline points="1593.0,502.0 1645.0,502.0" fill="none" stroke="#ff0000" stroke-width="22.6" stroke-linejoin="round" stroke-linecap="round" stroke-linecap="butt"/>
<polyline points="1574.0,598.0 1574.0,790.0 1613.0,829.0 1706.0,829.0" fill="none" stroke="#ff0000" stroke-width="37" stroke-linejoin="round" stroke-linecap="round" stroke-linejoin="miter" stroke-linecap="butt"/>
<polyline points="1706.0,588.0 1677.0,588.0 1616.4,648.0 1616.4,690.0 1639.0,713.0 1706.0,713.0" fill="none" stroke="#ff0000" stroke-width="11.3" stroke-linejoin="round" stroke-linecap="round" stroke-linejoin="miter" stroke-linecap="butt"/>
<polyline points="1670.0,674.0 1670.0,646.0 1706.0,610.0" fill="none" stroke="#ff0000" stroke-width="11.3" stroke-linejoin="round" stroke-linecap="round" stroke-linejoin="miter" stroke-linecap="butt"/>
<polyline points="1701.0,470.0 1701.0,527.0" fill="none" stroke="#ff0000" stroke-width="10" stroke-linejoin="round" stroke-linecap="round" stroke-linecap="butt"/>
<polygon points="1652.0,1060.0 1688.0,1060.0 1688.0,1090.0 1706.0,1108.0 1706.0,1143.0 1690.0,1143.0 1652.0,1106.0" fill="#ff0000" />
<path d="M1437.6,470V1031A32,32 0 0 1 1405.6,1063H1285.5V1327.7H1706" fill="none" stroke="#00ffff" stroke-width="1.2"/>
<line x1="1285.5" y1="1207.3" x2="1706" y2="1207.3" stroke="#ff00ff" stroke-width="1.2"/>
<circle cx="1346" cy="1259.4" r="37.3" fill="none" stroke="#d0d0d0" stroke-width="1.1"/><path d="M1308.7,1259.4H1383.3M1346,1222.1V1296.7" stroke="#d0d0d0" stroke-width="1.1"/>
<circle cx="1539.7" cy="1086" r="49.8" fill="none" stroke="#00ff00" stroke-width="7" />
<rect x="1530.00" y="1073.50" width="19.20" height="15.54" rx="8.40" fill="none" stroke="#00ff00" stroke-width="6"/><rect x="1527.60" y="1089.04" width="24.00" height="21.46" rx="10.08" fill="none" stroke="#00ff00" stroke-width="6"/>
<g transform="translate(1438,1171) scale(1,1)"><path d="M226,9 C226,3 220.5,0 215.0,0 C208.84,0 204,4 204,10 C204,15 206,17 210,21 L226,33 L204,33 M175,0 H189 L194,8 V25 L189,33 H175 L170,25 V8 Z M174,9 L189,26 M128,33 V0 L135,8 M107,9 C107,3 101.75,0 96.5,0 C90.62,0 86,4 86,10 C86,15 88,17 92,21 L107,33 L86,33 M40,0 H52 L57,8 V25 L52,33 H40 L35,25 V8 Z M39,9 L52,26 M0,0 H24 M1.5,2 L18,33" fill="none" stroke="#00ff00" stroke-width="6" stroke-linecap="round" stroke-linejoin="round" vector-effect="non-scaling-stroke"/><ellipse cx="156" cy="31.5" rx="3.30" ry="3.30" fill="#00ff00"/><ellipse cx="72" cy="31.5" rx="3.30" ry="3.30" fill="#00ff00"/></g>
<path d="M1370,667.3H1547.6V683.3H1370ZM1608.6,667.3H1706M1608.6,683.3H1706M1370,744.4H1547.6V760.4H1370ZM1608.6,744.4H1706M1608.6,760.4H1706M1370,821.5H1547.6V837.5H1370ZM1608.6,821.5H1706M1608.6,837.5H1706M1370,898.6H1547.6V914.6H1370ZM1608.6,898.6H1706M1608.6,914.6H1706M1370,975.7H1547.6V991.7H1370ZM1608.6,975.7H1706M1608.6,991.7H1706M1370,1052.8H1547.6V1068.8H1370ZM1608.6,1052.8H1706M1608.6,1068.8H1706M1547.6,637.3H1608.6V1098H1547.6ZM1547.6,713.3H1608.6M1547.6,790.4H1608.6M1547.6,867.5H1608.6M1547.6,944.6H1608.6M1547.6,1021.7H1608.6" fill="none" stroke="#808000" stroke-width="1.1"/>
<circle cx="1593" cy="502" r="13.5" fill="none" stroke="#00ffff" stroke-width="8.7" />
<circle cx="1593" cy="502" r="9.1" fill="#000" />
<circle cx="1484.7" cy="552" r="13.5" fill="none" stroke="#00ffff" stroke-width="8.7" />
<circle cx="1484.7" cy="552" r="9.1" fill="#000" />
<circle cx="1484.7" cy="602" r="13.5" fill="none" stroke="#00ffff" stroke-width="8.7" />
<circle cx="1484.7" cy="602" r="9.1" fill="#000" />
<circle cx="1574" cy="598" r="13.5" fill="none" stroke="#00ffff" stroke-width="8.7" />
<circle cx="1574" cy="598" r="9.1" fill="#000" />
<circle cx="1574" cy="651.7" r="13.5" fill="none" stroke="#00ffff" stroke-width="8.7" />
<circle cx="1574" cy="651.7" r="9.1" fill="#000" />
<circle cx="1670" cy="674.6" r="18.5" fill="none" stroke="#808000" stroke-width="9" />
<circle cx="1670" cy="674.6" r="14" fill="#000" />
<rect x="1661" y="661.6" width="18" height="14" fill="#fff" />
<rect x="1650" y="675.6" width="40" height="13" fill="#fff" />
<text x="1670" y="673.1" font-size="11.5" text-anchor="middle" fill="#000" font-family="Liberation Sans">2</text>
<text x="1670" y="686.6" font-size="11.5" text-anchor="middle" fill="#000" font-family="Liberation Sans">RL2</text>
<circle cx="1670" cy="751.7" r="18.5" fill="none" stroke="#808000" stroke-width="9" />
<circle cx="1670" cy="751.7" r="14" fill="#000" />
<rect x="1661" y="738.7" width="18" height="14" fill="#fff" />
<rect x="1650" y="752.7" width="40" height="13" fill="#fff" />
<text x="1670" y="750.2" font-size="11.5" text-anchor="middle" fill="#000" font-family="Liberation Sans">4</text>
<text x="1670" y="763.7" font-size="11.5" text-anchor="middle" fill="#000" font-family="Liberation Sans">7V</text>
<circle cx="1670" cy="828.8" r="18.5" fill="none" stroke="#808000" stroke-width="9" />
<circle cx="1670" cy="828.8" r="14" fill="#000" />
<rect x="1661" y="815.8" width="18" height="14" fill="#fff" />
<rect x="1650" y="829.8" width="40" height="13" fill="#fff" />
<text x="1670" y="827.3" font-size="11.5" text-anchor="middle" fill="#000" font-family="Liberation Sans">6</text>
<text x="1670" y="840.8" font-size="11.5" text-anchor="middle" fill="#000" font-family="Liberation Sans">GNDD</text>
<circle cx="1670" cy="905.8" r="18.5" fill="none" stroke="#808000" stroke-width="9" />
<circle cx="1670" cy="905.8" r="14" fill="#000" />
<rect x="1661" y="892.8" width="18" height="14" fill="#fff" />
<rect x="1650" y="906.8" width="40" height="13" fill="#fff" />
<text x="1670" y="904.3" font-size="11.5" text-anchor="middle" fill="#000" font-family="Liberation Sans">8</text>
<text x="1670" y="917.8" font-size="11.5" text-anchor="middle" fill="#000" font-family="Liberation Sans">+7V</text>
<circle cx="1670" cy="1059.5" r="18.5" fill="none" stroke="#808000" stroke-width="9" />
<circle cx="1670" cy="1059.5" r="14" fill="#000" />
<rect x="1661" y="1046.5" width="18" height="14" fill="#fff" />
<rect x="1650" y="1060.5" width="40" height="13" fill="#fff" />
<text x="1670" y="1058.0" font-size="11.5" text-anchor="middle" fill="#000" font-family="Liberation Sans">12</text>
<text x="1670" y="1071.5" font-size="11.5" text-anchor="middle" fill="#000" font-family="Liberation Sans">GNDC</text>
<circle cx="1670" cy="982" r="17" fill="none" stroke="#808000" stroke-width="1.2" />
<path d="M1653,982H1687M1670,965V999" stroke="#808000" stroke-width="1"/>
<rect x="1656" y="975" width="28" height="13" fill="#fff" />
<text x="1670" y="986" font-size="11.5" text-anchor="middle" fill="#000" font-family="Liberation Sans">10</text>
<rect x="1630.7" y="484" width="30.3" height="36.3" fill="#c0c0c0" />
<rect x="1693" y="484" width="13" height="36.3" fill="#c0c0c0" />
<rect x="1647" y="483" width="70" height="38.7" fill="none" stroke="#fff" stroke-width="1"/>
<rect x="1624.7" y="502" width="44.3" height="13" fill="#fff" />
<text x="1647" y="513.5" font-size="11.5" text-anchor="middle" fill="#000" font-family="Liberation Sans">GNDD</text>
<rect x="1688" y="502" width="20" height="13" fill="#fff" />
<text x="1643" y="556" font-size="37" fill="#fff" font-family="Liberation Sans">C12</text>
<path d="M1482,1398V1395Q1482,1390 1490,1390H1500Q1511,1390 1511,1398Z" fill="#fff"/>
</svg></div>
<div class="a" style="left:1201px;top:1398px;width:505px;height:17px;background:#f0f0f0;"></div>
<svg class="a" style="left:1205px;top:1402px" width="8" height="10" viewBox="0 0 8 10"><path d="M6.5 1L2 5l4.5 4" fill="none" stroke="#404040" stroke-width="1.6"/></svg>
<div class="a" style="left:1441px;top:1400px;width:17px;height:14px;background:#cdcdcd;"></div>
<div class="a" style="left:968px;top:1416px;width:738px;height:1px;background:#d8d8d8;"></div>
<div class="a" style="left:970px;top:1419.5px;font-size:12px;line-height:15px;color:#000;white-space:nowrap;letter-spacing:-0.6px">Click &lt;Left&gt; to single Select, &lt;Ctrl&gt;&lt;Left&gt; for multiple, or drag for block select.</div>
<div class="a" style="left:968px;top:1437px;width:71px;height:20px;background:#fff;border-top:1px solid #808080;border-left:1px solid #808080;border-bottom:1px solid #fff;border-right:1px solid #fff;box-shadow:inset 1px 1px 0 #404040"></div>
<div class="a" style="left:978px;top:1439.5px;font-size:12px;line-height:15px;color:#000;white-space:nowrap;">4.064</div>
<div class="a" style="left:1040px;top:1437px;width:72px;height:20px;background:#fff;border-top:1px solid #808080;border-left:1px solid #808080;border-bottom:1px solid #fff;border-right:1px solid #fff;box-shadow:inset 1px 1px 0 #404040"></div>
<div class="a" style="left:1043px;top:1439.5px;font-size:12px;line-height:15px;color:#000;white-space:nowrap;">-24.003</div>
<div class="a" style="left:1115px;top:1437px;width:32px;height:21px;background:#e1e1e1;border:2px solid #00e8f0"></div>
<div class="a" style="left:1119px;top:1440px;width:24px;height:15px;background:#e1e1e1;border:1px solid #a0a0a0"></div>
<div class="a" style="left:1122px;top:1440.5px;font-size:12.5px;line-height:15.5px;color:#000;white-space:nowrap;">Rel</div>
<div class="a" style="left:1150px;top:1437px;width:86px;height:20px;background:#fff;border-top:1px solid #808080;border-left:1px solid #808080;border-bottom:1px solid #fff;border-right:1px solid #fff;box-shadow:inset 1px 1px 0 #404040"></div><div class="a" style="left:1153px;top:1439.5px;font-size:12px;line-height:15px;color:#000;white-space:nowrap;">0.127</div><svg class="a" style="left:1219px;top:1443px" width="11" height="8" viewBox="0 0 11 8"><path d="M1 1.5l4.5 4.5 4.5-4.5" fill="none" stroke="#404040" stroke-width="1.3"/></svg>
<div class="a" style="left:1238px;top:1437px;width:22px;height:21px;background:#f0f0f0;border:1px solid #a0a0a0"></div>
<div class="a" style="left:1241px;top:1440px;width:15px;height:15px;background:#e1e1e1;border:1px solid #a0a0a0"></div>
<div class="a" style="left:1243px;top:1440.5px;font-size:12px;line-height:15px;color:#000;white-space:nowrap;">M</div>
<div class="a" style="left:1261px;top:1437px;width:86px;height:20px;background:#e6e6e6;border-top:1px solid #808080;border-left:1px solid #808080;border-bottom:1px solid #fff;border-right:1px solid #fff;box-shadow:inset 1px 1px 0 #404040"></div><div class="a" style="left:1264px;top:1439.5px;font-size:12px;line-height:15px;color:#000;white-space:nowrap;">Top</div><svg class="a" style="left:1330px;top:1443px" width="11" height="8" viewBox="0 0 11 8"><path d="M1 1.5l4.5 4.5 4.5-4.5" fill="none" stroke="#404040" stroke-width="1.3"/></svg>
<div class="a" style="left:1351px;top:1437px;width:22px;height:21px;background:#ff0000;border:1px solid #808080"></div>
<div class="a" style="left:1375px;top:1437px;width:16px;height:21px;background:#f0f0f0;border:1px solid #a0a0a0"></div>
<svg class="a" style="left:1378px;top:1439px" width="10" height="17" viewBox="0 0 10 17"><path d="M1 6l4-4 4 4z M1 11l4 4 4-4z" fill="#000"/></svg>
<div class="a" style="left:1394px;top:1437px;width:85px;height:20px;background:#fff;border-top:1px solid #808080;border-left:1px solid #808080;border-bottom:1px solid #fff;border-right:1px solid #fff;box-shadow:inset 1px 1px 0 #404040"></div><div class="a" style="left:1397px;top:1439.5px;font-size:12px;line-height:15px;color:#000;white-space:nowrap;">0.254mm</div><svg class="a" style="left:1462px;top:1443px" width="11" height="8" viewBox="0 0 11 8"><path d="M1 1.5l4.5 4.5 4.5-4.5" fill="none" stroke="#404040" stroke-width="1.3"/></svg>
<div class="a" style="left:1480px;top:1437px;width:85px;height:20px;background:#fff;border-top:1px solid #808080;border-left:1px solid #808080;border-bottom:1px solid #fff;border-right:1px solid #fff;box-shadow:inset 1px 1px 0 #404040"></div><div class="a" style="left:1483px;top:1439.5px;font-size:12px;line-height:15px;color:#000;white-space:nowrap;">(None)</div><svg class="a" style="left:1548px;top:1443px" width="11" height="8" viewBox="0 0 11 8"><path d="M1 1.5l4.5 4.5 4.5-4.5" fill="none" stroke="#404040" stroke-width="1.3"/></svg>
<div class="a" style="left:1568px;top:1437px;width:138px;height:20px;background:#f0f0f0;border-top:1px solid #808080;border-left:1px solid #808080;border-bottom:1px solid #fff;border-right:1px solid #fff;box-shadow:inset 1px 1px 0 #404040"></div>
</body></html>
